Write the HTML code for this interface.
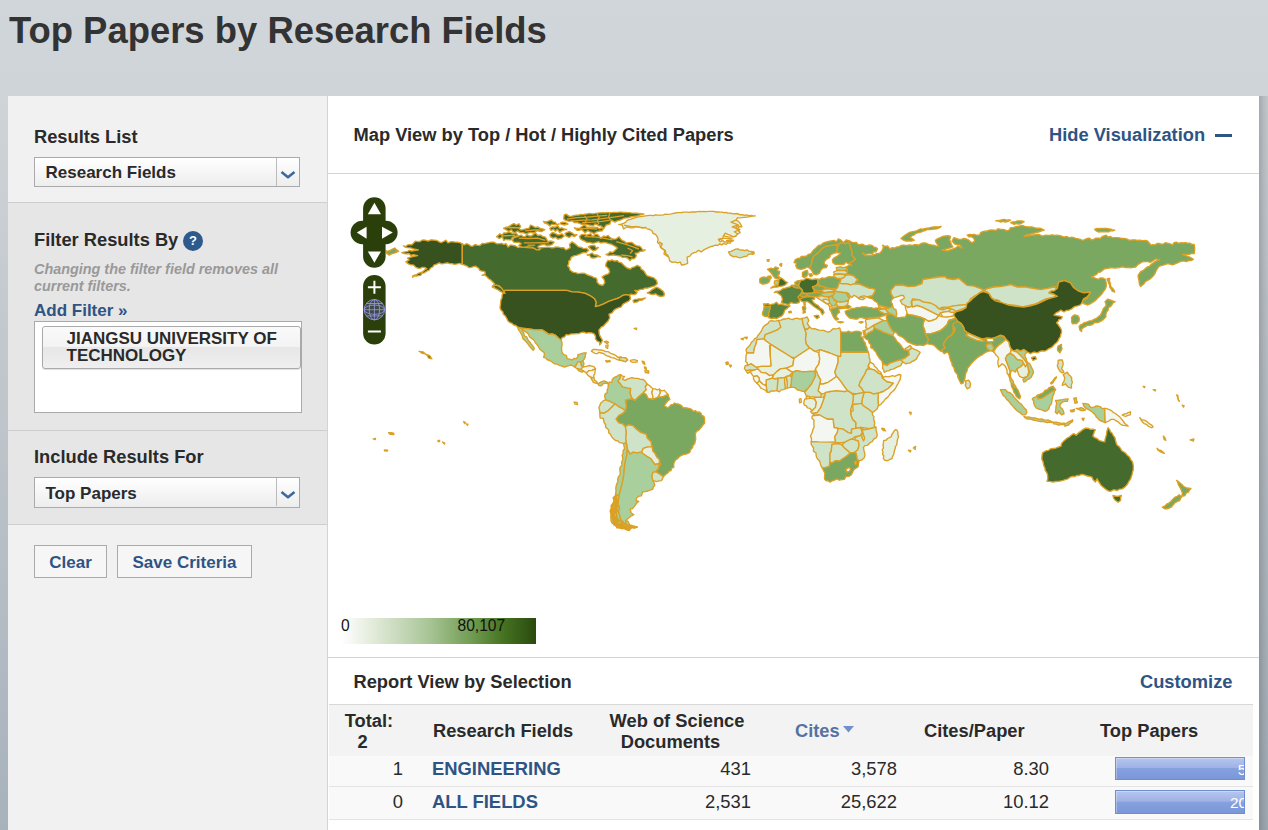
<!DOCTYPE html>
<html lang="en">
<head>
<meta charset="utf-8">
<title>Top Papers by Research Fields</title>
<style>
*{box-sizing:border-box;margin:0;padding:0}
html,body{width:1268px;height:830px;overflow:hidden}
body{background:linear-gradient(180deg,#d1d6da 0,#cfd4d8 90px,#a8b2bb 830px);font-family:"Liberation Sans",Arial,sans-serif;color:#2a2a2a;position:relative}
h1{position:absolute;left:8.9px;top:9.5px;font-size:36.45px;line-height:42px;font-weight:bold;color:#333;white-space:nowrap;letter-spacing:0}
#panel{position:absolute;left:8px;top:96px;width:1251px;height:760px;background:#fff}
#shd{position:absolute;left:1251px;top:0;width:9px;height:760px;background:linear-gradient(90deg,rgba(40,46,52,.26),rgba(40,46,52,.14) 55%,rgba(40,46,52,.08))}
#side{position:absolute;left:0;top:0;width:320px;height:760px;background:#f1f1f1;border-right:1px solid #d3d3d3}
.sec{position:absolute;left:0;width:319px}
.sec h3{position:absolute;left:26px;font-size:18.3px;line-height:20px;font-weight:bold;color:#2a2a2a;white-space:nowrap}
.sel{position:absolute;left:26px;width:266px;height:30px;border:1px solid #aaa;background:linear-gradient(#fff,#ededed);font-size:17px;font-weight:bold;line-height:30px;padding-left:10.5px;color:#2a2a2a}
.sel i{position:absolute;right:0;top:0;width:23px;height:28px;border-left:1px solid #bbb}
.sel svg{position:absolute;right:2px;top:12px}
#main{position:absolute;left:320px;top:0;width:931px;height:760px;background:#fff}
.hd{position:absolute;left:25.5px;font-size:18.3px;font-weight:bold;line-height:20px;color:#2a2a2a;white-space:nowrap}
.lnk{position:absolute;font-size:18.3px;font-weight:bold;line-height:20px;color:#2e5484;white-space:nowrap}
.hr{position:absolute;left:0;width:931px;height:1px;background:#d4d4d4}
.th{position:absolute;font-size:18.3px;line-height:21px;font-weight:bold;color:#2a2a2a;white-space:normal}
.tr{position:absolute;left:0;width:924px;background:#f9f9f9;border-bottom:1px solid #e4e4e4}
.td{position:absolute;font-size:18.4px;line-height:22px;color:#2a2a2a;white-space:nowrap}
.num{text-align:right}
.lk{font-weight:bold;color:#2e5484}
.bar{position:absolute;left:786px;width:130px;height:23px;overflow:hidden;border:1px solid #6f8dd2;box-shadow:inset 1px 1px 0 rgba(255,255,255,.3);background:linear-gradient(#b6c6ee 0%,#9db2e5 47%,#86a1de 50%,#7a97d9 100%)}
.bar b{position:absolute;top:2.5px;font-size:15.4px;line-height:17px;font-weight:normal;color:#fff}
</style>
</head>
<body>
<h1>Top Papers by Research Fields</h1>
<div id="panel">
 <div id="shd"></div>
 <div id="side">
  <div class="sec" style="top:0;height:107px;background:#f1f1f1;border-bottom:1px solid #cecece">
   <h3 style="top:31px">Results List</h3>
   <div class="sel" style="top:61px">Research Fields<i></i><svg width="18" height="10" viewBox="0 0 18 10"><path d="M2.5 2 L9 7.2 L15.5 2" fill="none" stroke="#3c6a9c" stroke-width="2.6" stroke-linejoin="round"/></svg></div>
  </div>
  <div class="sec" style="top:107px;height:228px;background:#e6e6e6;border-bottom:1px solid #cecece">
   <h3 style="top:26.5px">Filter Results By</h3>
   <span style="position:absolute;left:175px;top:28px;width:20px;height:20px;border-radius:50%;background:#2d5a8c;color:#fff;font-size:13px;font-weight:bold;line-height:20px;text-align:center">?</span>
   <p style="position:absolute;left:26px;top:58px;width:270px;font-size:14.4px;line-height:17.2px;font-style:italic;font-weight:bold;color:#999">Changing the filter field removes all current filters.</p>
   <a class="lnk" style="left:26px;top:98px;font-size:17px">Add Filter »</a>
   <div style="position:absolute;left:26px;top:118px;width:268px;height:92px;background:#fff;border:1px solid #aaa">
     <div style="position:absolute;left:7px;top:3.5px;width:259px;height:43.5px;border:1px solid #aaa;border-radius:3px;box-shadow:0 1px 1px rgba(0,0,0,.12);background:linear-gradient(#fafafa 0%,#f3f3f3 48%,#e7e7e7 50%,#efefef 100%);font-size:17px;line-height:16.9px;font-weight:bold;color:#2a2a2a;padding:4.5px 0 0 23.5px">JIANGSU UNIVERSITY OF TECHNOLOGY</div>
   </div>
  </div>
  <div class="sec" style="top:335px;height:94px;background:#e6e6e6;border-bottom:1px solid #cecece">
   <h3 style="top:15.5px">Include Results For</h3>
   <div class="sel" style="top:46px;height:31px;line-height:32px">Top Papers<i></i><svg width="18" height="10" viewBox="0 0 18 10"><path d="M2.5 2 L9 7.2 L15.5 2" fill="none" stroke="#3c6a9c" stroke-width="2.6" stroke-linejoin="round"/></svg></div>
  </div>
  <div style="position:absolute;left:26px;top:449px;width:73px;height:33px;border:1px solid #aaa;background:#f6f6f6;font-size:17px;font-weight:bold;color:#2e5484;line-height:33px;text-align:center">Clear</div>
  <div style="position:absolute;left:109px;top:449px;width:135px;height:33px;border:1px solid #aaa;background:#f6f6f6;font-size:17px;font-weight:bold;color:#2e5484;line-height:33px;text-align:center">Save Criteria</div>
 </div>
 <div id="main">
  <div class="hd" style="top:28.6px">Map View by Top / Hot / Highly Cited Papers</div>
  <a class="lnk" style="left:721px;top:28.5px">Hide Visualization</a>
  <span style="position:absolute;left:887px;top:37.5px;width:17px;height:3px;background:#2e5484"></span>
  <div class="hr" style="top:77px"></div>
  <div id="map" style="position:absolute;left:0;top:78px;width:931px;height:483px;overflow:hidden"><!--MAP--><svg id="mapsvg" width="931" height="483" viewBox="0 0 931 483" stroke="#dba024" stroke-width="1.35" stroke-linejoin="round" style="position:absolute;left:0;top:0">
<path d="M509.2,73.9 507.1,70.8 508.2,69.6 511.0,68.6 512.1,70.0 509.2,73.9Z" fill="#7aa860" stroke="none"/>
<path d="M205.0,74.9 197.2,74.4 195.4,73.0 196.5,71.9 198.0,71.6 204.2,72.1 206.1,73.8 205.0,74.9Z" fill="#456a2e" stroke="none"/>
<path d="M519.2,98.9 515.6,96.5 516.8,95.1 518.8,94.4 520.1,95.5 520.4,96.8 520.4,97.8 519.2,98.9Z" fill="#7aa860" stroke="none"/>
<path d="M491.2,112.6 488.5,112.4 487.4,111.2 490.0,107.9 492.4,111.5 491.2,112.6Z" fill="#7aa860" stroke="none"/>
<path d="M728.0,116.1 725.4,113.2 726.5,112.1 728.0,112.1 729.5,110.1 730.6,111.2 730.4,113.5 728.0,116.1Z" fill="#37521f" stroke="none"/>
<path d="M172.2,114.1 169.1,112.0 170.8,110.4 173.4,113.0 172.2,114.1Z" fill="#456a2e" stroke="none"/>
<path d="M506.5,116.6 501.5,115.9 496.2,116.1 495.1,115.0 495.9,114.2 495.4,113.2 497.0,112.1 503.8,114.1 507.0,114.1 508.1,115.2 506.5,116.6Z" fill="#7aa860" stroke="none"/>
<path d="M500.8,119.4 498.8,119.4 497.6,118.2 498.8,117.1 504.5,116.4 506.0,114.9 508.9,117.2 507.8,118.4 505.2,119.1 500.8,119.4Z" fill="#a9cf9c" stroke="none"/>
<path d="M659.8,119.9 655.5,118.4 652.5,119.4 651.4,118.2 656.0,115.1 659.0,116.9 660.9,118.8 659.8,119.9Z" fill="#cfe3c8" stroke="none"/>
<path d="M493.0,121.1 491.8,119.9 488.2,119.4 484.8,119.9 483.6,118.8 485.6,117.0 485.4,116.5 486.5,115.4 490.5,115.9 493.5,115.4 497.4,118.8 496.2,119.9 494.2,120.1 493.0,121.1Z" fill="#7aa860" stroke="none"/>
<path d="M479.0,121.6 477.0,120.1 473.2,120.4 472.1,119.2 473.1,116.8 474.2,115.6 475.8,117.9 481.5,118.1 482.6,119.2 479.0,121.6Z" fill="#7aa860" stroke="none"/>
<path d="M724.0,120.6 721.2,120.4 720.1,119.2 722.0,117.9 724.0,118.4 725.1,119.5 724.0,120.6Z" fill="#cfe3c8" stroke="none"/>
<path d="M641.8,127.9 640.6,126.8 641.4,125.0 645.2,121.6 648.5,119.9 649.6,121.0 641.8,127.9Z" fill="#cfe3c8" stroke="none"/>
<path d="M471.5,126.4 469.1,123.0 471.5,120.4 473.8,122.1 477.0,121.6 479.0,120.1 483.5,121.4 484.6,122.5 483.5,123.6 477.0,123.9 473.2,124.9 471.5,126.4Z" fill="#5a8540" stroke="none"/>
<path d="M727.0,123.9 725.4,122.8 728.0,120.4 730.1,122.2 729.0,123.4 727.0,123.9Z" fill="#37521f" stroke="none"/>
<path d="M755.8,126.6 754.1,125.5 754.4,125.0 760.0,120.6 761.1,121.8 760.1,124.0 758.8,125.4 755.8,126.6Z" fill="#7aa860" stroke="none"/>
<path d="M696.8,133.9 694.5,133.9 693.4,132.8 694.5,131.6 707.8,128.9 718.0,123.6 722.2,122.9 723.4,124.0 722.2,125.1 719.2,125.9 708.8,130.9 696.8,133.9Z" fill="#37521f" stroke="none"/>
<path d="M585.8,127.1 584.2,127.1 583.1,126.0 584.8,123.9 590.2,124.4 591.4,125.5 590.2,126.6 585.8,127.1Z" fill="#cfe3c8" stroke="none"/>
<path d="M672.5,129.1 667.5,127.9 664.4,125.2 665.5,124.1 670.8,125.1 673.6,128.0 672.5,129.1Z" fill="#37521f" stroke="none"/>
<path d="M583.5,131.1 582.4,130.0 582.1,128.5 582.4,127.2 583.5,126.1 584.6,127.2 584.6,130.0 583.5,131.1Z" fill="#cfe3c8" stroke="none"/>
<path d="M692.8,133.6 680.8,132.1 678.4,130.5 679.5,129.4 680.8,129.4 692.8,131.4 693.9,132.5 692.8,133.6Z" fill="#cfe3c8" stroke="none"/>
<path d="M614.5,136.4 610.8,135.9 609.6,134.8 610.8,133.6 614.0,132.6 616.1,135.0 614.5,136.4Z" fill="#cfe3c8" stroke="none"/>
<path d="M626.8,139.9 625.5,138.9 620.8,138.4 619.6,137.2 623.2,133.9 627.2,136.4 636.0,133.1 637.6,134.2 634.0,136.9 628.0,138.6 626.8,139.9Z" fill="#cfe3c8" stroke="none"/>
<path d="M563.5,141.4 557.2,140.9 556.1,139.8 557.2,138.6 561.0,138.1 563.5,139.1 564.6,140.2 563.5,141.4Z" fill="#7aa860" stroke="none"/>
<path d="M614.2,143.6 610.8,142.6 609.6,141.5 612.2,138.1 615.4,142.2 614.2,143.6Z" fill="#f4f7f1" stroke="none"/>
<path d="M625.5,157.9 624.4,156.8 623.9,154.5 624.4,153.2 625.8,152.1 627.9,154.2 625.5,157.9Z" fill="#7aa860" stroke="none"/>
<path d="M193.5,155.4 191.8,154.9 190.6,153.8 191.8,152.6 193.5,152.9 194.6,154.0 193.5,155.4Z" fill="#a9cf9c" stroke="none"/>
<path d="M624.8,160.4 623.6,159.0 625.5,156.9 626.6,158.2 624.8,160.4Z" fill="#7aa860" stroke="none"/>
<path d="M675.5,163.4 672.2,162.4 671.5,162.6 670.4,161.5 672.0,160.1 675.2,160.9 676.6,162.2 675.5,163.4Z" fill="#37521f" stroke="none"/>
<path d="M655.5,167.1 650.9,164.2 652.0,163.1 654.0,163.9 657.0,163.4 658.1,164.5 655.5,167.1Z" fill="#37521f" stroke="none"/>
<path d="M442.0,177.6 440.9,176.5 440.6,171.5 442.2,170.1 443.4,171.2 443.1,176.5 442.0,177.6Z" fill="#f4f7f1" stroke="none"/>
<path d="M490.5,179.9 486.8,178.4 485.6,177.2 486.8,176.1 491.2,174.6 492.4,176.0 491.9,178.2 490.5,179.9Z" fill="#f4f7f1" stroke="none"/>
<path d="M688.8,178.9 686.0,178.1 684.9,177.0 688.8,174.6 689.9,175.8 689.9,177.8 688.8,178.9Z" fill="#e6f0e0" stroke="none"/>
<path d="M465.8,185.6 463.1,183.5 464.2,182.4 466.2,182.9 467.4,184.0 465.8,185.6Z" fill="#cfe3c8" stroke="none"/>
<path d="M539.2,196.6 537.6,195.5 539.1,192.0 540.2,190.9 542.9,194.8 541.8,195.9 539.2,196.6Z" fill="#cfe3c8" stroke="none"/>
<path d="M488.0,198.1 486.8,198.1 485.6,197.0 487.5,194.1 488.6,195.2 489.1,197.0 488.0,198.1Z" fill="#f4f7f1" stroke="none"/>
<path d="M422.5,198.1 421.1,197.0 421.1,196.0 422.2,194.9 425.2,194.9 426.4,196.0 425.2,197.1 422.5,198.1Z" fill="#cfe3c8" stroke="none"/>
<path d="M700.5,200.4 699.4,199.0 699.9,198.2 699.6,196.2 700.8,195.1 701.9,196.2 702.4,198.0 700.5,200.4Z" fill="#a9cf9c" stroke="none"/>
<path d="M463.5,203.9 460.6,201.2 464.2,197.9 465.4,199.0 465.4,199.8 464.6,202.8 463.5,203.9Z" fill="#a9cf9c" stroke="none"/>
<path d="M492.8,224.1 491.6,223.0 492.4,220.0 493.5,218.9 497.0,217.6 498.1,218.8 497.4,221.5 496.2,222.6 492.8,224.1Z" fill="#cfe3c8" stroke="none"/>
<path d="M525.5,221.6 522.9,219.2 524.0,218.1 527.2,218.9 528.4,220.0 527.2,221.1 525.5,221.6Z" fill="#cfe3c8" stroke="none"/>
<path d="M486.2,225.9 481.8,225.1 480.6,224.0 480.6,222.8 481.8,221.6 486.2,221.9 487.4,223.0 487.4,224.8 486.2,225.9Z" fill="#e6f0e0" stroke="none"/>
<path d="M305.8,226.6 303.0,225.9 300.5,226.4 299.4,225.2 300.5,224.1 304.2,223.4 306.9,225.5 305.8,226.6Z" fill="#7aa860" stroke="none"/>
<path d="M525.5,231.6 524.5,231.6 523.4,230.2 524.5,229.1 526.8,229.1 527.9,230.2 526.8,231.4 525.5,231.6Z" fill="#cfe3c8" stroke="none"/>
<path d="M535.5,256.9 532.1,253.8 533.2,252.6 541.8,253.4 542.9,254.5 541.2,255.9 535.5,256.9Z" fill="#cfe3c8" stroke="none"/>
<path d="M533.5,262.9 531.4,261.0 533.8,258.4 534.9,259.5 534.9,260.5 534.6,261.8 533.5,262.9Z" fill="#cfe3c8" stroke="none"/>
<path d="M526.5,266.4 524.0,266.1 522.9,265.0 527.0,261.4 529.8,261.1 530.9,262.2 529.8,263.4 528.5,263.6 526.5,266.4Z" fill="#cfe3c8" stroke="none"/>
<path d="M514.0,271.6 510.2,270.6 507.9,268.8 509.0,267.6 516.8,267.1 517.9,268.2 514.0,271.6Z" fill="#cfe3c8" stroke="none"/>
<path d="M331.0,293.9 329.9,292.8 329.9,290.8 330.4,286.8 331.5,285.6 332.6,286.8 333.1,290.8 331.0,293.9Z" fill="#7aa860" stroke="none"/>
<path d="M134.3,69.8 131.8,68.7 129,68.2 126.8,68.1 124.5,67.7 122.3,67.8 120,68.9 117.9,66.2 115.6,67.5 113.2,68.6 111,67.8 108.9,66.5 106,66.1 103,65.8 100.1,67.1 97.1,66.2 94.4,66 92.1,67.5 89.8,67.7 87.3,67.2 85.4,69.2 83.8,70.8 81.6,70.6 79.6,70.9 77.8,72.4 75.4,72 77.3,73.3 79.6,73.7 82.6,73.9 85.4,74.9 90.4,75.9 83.7,77 81.3,76.3 79.3,77.7 77,77.9 73.7,78.7 76.1,79.6 78.7,79.9 81,79.5 83,81.5 85.4,80.7 89.6,81.6 83.7,82.9 81.6,83.5 79.6,84.2 81.2,85.9 77.9,87.9 80.4,89.9 82.8,90.9 85.4,90.9 87.9,93.3 89.9,94.1 92.1,94.3 94.1,93.3 96.3,93.3 98.8,94.6 97,95.7 95.5,97.1 93.1,98.5 90.4,99.3 88.6,100.6 86.5,101.2 84.6,102.2 84.6,103.3 86.3,102 88.4,102.1 90.4,101.7 92.7,101.3 94.1,99.2 96.3,98.8 98.7,97.2 101.3,96 102.6,94 104.7,93 105.9,91.1 108,90.4 111.4,88.8 113.4,89.9 115.6,89.6 117.6,89.1 119.7,88.8 121.7,89.7 123.9,89.6 126.4,90.3 129,89.9 131.7,89.4 134.3,90.4Z" fill="#37521f"/>
<path d="M134.3,69.8 136.3,71 138.6,69.6 140.7,70.5 142.7,72 144.7,72.2 147,70.5 149,71.2 151.9,71.5 154.1,69.5 156.4,69.6 158.6,69.1 160.8,68.7 163.3,68.1 165.8,68.2 169.1,69.8 171.4,69.7 173.6,69.3 175.8,70.4 178.1,69.7 180.1,73.1 182.5,70.9 185.1,71.3 187.6,72 189.9,73.5 192.6,72.9 199.3,73.7 206,74.2 211,75.9 212,73.7 214.4,73.7 221.1,73.2 223.4,73.8 225.6,73.8 227.8,72.9 230.3,73.1 232.8,73.7 235.8,73.7 237.8,75.9 237.8,75.9 240.1,74.9 242.2,73.7 241.4,70.4 243.9,67.9 247.2,69.9 248.9,71.4 250.6,72.9 253.2,73.4 255.6,74.6 258.5,74.3 260.6,76.2 258.1,78.7 256,78.5 254.1,78.9 252.2,79.9 250.3,80.6 248.4,81.4 246.4,81.6 243,83.3 242.7,85.6 240.8,87.1 240.6,89.7 239.7,92.1 241.4,93.7 241.9,96 243.6,97.3 245.5,98.3 247.7,98.7 249.9,99.6 252.2,99.3 254.6,99.1 256.8,99.4 258.9,100.7 261.4,101.7 264,102.4 265.8,103.7 268.1,104 269.1,105.9 269,108 271.5,110.7 274.8,111.4 276.7,108.9 276.5,106.9 275.7,105 274,103 276,101.6 278.2,100.7 280.3,99.8 281.7,98 280.7,94.7 277.7,92.1 278.2,89 280,86.3 282.1,86.9 284,85.8 286.4,87.2 289.1,86.6 290.9,88.2 293.3,88.8 296.1,91.6 299.1,94 302.5,95 304.1,93.6 306.2,93 309.2,91.3 312.5,93 313.2,95.2 315.2,96.3 316.5,97.9 317.5,99.7 318.9,101.7 321.2,102.4 323.5,103.2 325.9,103.9 328.6,106.4 329.3,109.7 326.2,112.2 322.6,113.1 319.2,114.2 316.9,114.1 314.8,115.4 312.5,115.4 309.7,116.7 306.7,116.4 309.2,118.4 307.9,120 305.8,120.6 302.5,120.1 301.1,122.5 302.5,124.8 301.6,121.4 298.3,120.6 294.9,121.4 290.7,124 285.7,125.6 280.7,127.3 275.7,129.8 270.7,131.8 267.3,132.5 268.1,128.1 266.5,124.8 262.3,121.8 257.3,119.4 250.6,118.1 243.9,117.8 238.8,116.4 202,116.4 176.7,116.4 175,118.1 171.7,116.4 173.3,113.9 170.8,111.4 168.3,113.4 166.1,113.9 164.1,113 165.5,111.5 166.6,109.7 164.1,107.2 162.5,105.8 160.8,104.7 158.3,102.2 156.4,100.9 154.1,101.3 157.4,99.7 156.6,97.3 154.1,97.1 151.8,96.4 150.7,94.3 147.4,92.1 145.3,92.7 143.2,93.3 140.8,93.6 139,92.1 136.7,91.1 134.3,90.4Z" fill="#456a2e"/>
<path d="M176.7,116.4 202,116.4 238.8,116.4 243.9,117.8 250.6,118.1 257.3,119.4 262.3,121.8 266.5,124.8 268.1,128.1 267.3,132.5 270.7,131.8 275.7,129.8 280.7,127.3 285.7,125.6 290.7,124 294.9,121.4 298.3,120.6 301.6,121.4 302.5,124.8 301,126.9 297.7,128.6 295.8,129.6 294.3,131.1 293.2,133 291,133.6 288.4,134.6 286,136.1 284.3,138.6 280.9,140.3 281.8,143.7 280.1,147 278.4,148.7 276.7,150.4 275.4,152.1 273.4,152.9 270.9,155.9 271.2,159.6 271.8,161.7 272.9,163.7 274.4,166.1 273.4,168.8 271.7,170.9 271.7,168.2 269.2,167.1 267.5,164.9 267.5,162.1 265.9,159.6 263.4,158.8 260.8,158.7 258.2,159.2 255.8,158.2 253.2,158.5 250.8,159.6 248.3,159.6 245.8,159.9 243.1,159.9 240.7,160.9 238.1,160.7 236.6,162.9 234,163.7 233.2,166.3 230.7,164.2 227.4,161.2 224,159.9 220.7,160.4 217.3,157.9 214,155.9 207.3,155.9 200.6,154.9 193.9,154.2 189.7,153.2 187.9,151.5 185.5,150.9 184.1,149.4 182.1,148.7 180,147 178.8,144.5 177.4,142.1 175.4,140.3 174.8,137.8 172.9,136.1 172,133.7 172.4,131.1 172.6,128.6 172.9,126.1 174,123.7 174.1,121Z" fill="#37521f"/>
<path d="M193.9,154.2 200.6,154.9 207.3,155.9 214,155.9 217.3,157.9 220.7,160.4 224,159.9 227.4,161.2 230.7,164.2 233.2,166.3 234,168.7 234,171.3 233.5,173.8 233.7,176.3 234.1,178.7 235.7,180.5 238.5,181.7 239.1,184.7 241.6,185.2 244.1,186 245.9,184.5 248.3,184.7 249.7,182.8 250,180.5 252.1,180.2 254.1,179.3 256.2,178.8 258.3,178.8 257.3,180.8 257.2,183 256.3,185 255,186.7 252.5,188 250,187.7 248.3,191 246.6,193 243.3,191 241.2,191.6 239.1,192.2 236.6,193.1 234,192.2 231.4,191.3 229,190 226.2,189.8 224,188 221.6,186.5 219,185.5 217.6,183.9 215.6,183.3 216.5,180.5 215.9,178.3 214,177.1 212,175.3 210.6,173 209.2,170.7 207.3,168.8 206.1,166.3 203.9,164.6 201.6,163 200.6,160.4 199.2,158.7 197.2,157.6 194.7,155.9Z" fill="#a9cf9c"/>
<path d="M189.7,153.2 193.5,154.5 195.9,159.6 196.5,162 198.9,163.1 199.7,165.4 201.5,167.6 203.1,169.9 204.9,172 206.4,174.3 205.2,176.3 203.3,174.2 201.4,172.1 200.2,170.4 198.9,168.7 197.5,167.1 195.1,165.1 194.2,162.1 193.2,159.8 191.9,157.6 190.4,155.6Z" fill="#a9cf9c"/>
<path d="M248.3,191 250,187.7 252.5,188 253.3,191.4 255,193 252.5,195.6 249.1,194.7 246.6,193Z" fill="#cfe3c8"/>
<path d="M253,187.7 255.1,187.2 256,189.7 255.1,192.2 253.5,191.7Z" fill="#a9cf9c"/>
<path d="M255,193 257.1,192.6 259.2,192.2 261.5,191.5 263.7,192.1 265.9,192.7 267.5,194.7 264.2,196.4 260.8,196.7 258.3,198.9 255.8,197.2 252.5,195.6Z" fill="#f4f7f1"/>
<path d="M249.1,194.7 252.5,195.6 255.8,197.2 254.1,198.2 250.8,196.9Z" fill="#cfe3c8"/>
<path d="M258.3,198.9 260.8,196.7 264.2,196.4 267.5,194.7 267,197.2 266.9,199.7 265.7,201.6 265.9,203.9 262.5,203.1 260,201.4Z" fill="#f4f7f1"/>
<path d="M262.5,203.1 265.9,203.9 266.4,206.1 268.4,207.3 270.2,209.8 267.5,209.1 265.4,208.3 264.2,206.4Z" fill="#cfe3c8"/>
<path d="M270.2,209.8 272.6,208.1 275.9,206.8 278.6,207.8 280.3,209.8 277.6,209.1 275.1,209.8 273.4,211.8 270.9,211.5Z" fill="#a9cf9c"/>
<path d="M263.4,177.1 265.1,175.5 267.5,175.5 270,175.8 272.6,176 275.2,176.4 277.6,177.6 280.3,177.7 282.6,179.3 285.2,180.1 287.6,181.3 289.8,183.3 292.7,183 295.1,183.9 297.7,183.8 299.7,186 297.2,187.7 294.3,186.7 291.8,186.3 289.3,185.7 286,184 283.3,183.6 280.9,182.3 278.1,181.6 275.9,179.7 273.4,179 270.9,178.3 269,179.7 266.7,179.3Z" fill="#f4f7f1"/>
<path d="M291.8,183.3 294.7,183.7 297.7,184 299.7,186 297.2,187.7 294.3,186.7 291,185.7Z" fill="#cfe3c8"/>
<path d="M277.6,186.7 279.7,187 281.8,186.4 282.3,187.7 278.4,188Z" fill="#f4f7f1"/>
<path d="M302.4,186.4 306.1,185.7 309.4,186.7 309.1,188 305.2,188.4 302.7,187.7Z" fill="#f4f7f1"/>
<path d="M276.2,167.6 278.4,167.1 280.6,168.3 279.3,169.6Z" fill="#f4f7f1"/>
<path d="M277.9,171.3 280.1,170.9 279.6,174.3 277.9,173.3Z" fill="#f4f7f1"/>
<path d="M314.1,187.2 316.1,187.7 316.9,190.5 315.3,189.7Z" fill="#f4f7f1"/>
<path d="M316.4,193 318.1,193.4 318.4,195.6 316.9,194.7Z" fill="#f4f7f1"/>
<path d="M319.1,196.7 320.8,197.2 320.5,199.1 319.1,198.4Z" fill="#f4f7f1"/>
<path d="M306.1,154.5 308.7,154.2 308.4,155.5Z" fill="#f4f7f1"/>
<path d="M246.1,228.2 249.1,228.5 249.5,230.6 247.1,230.2Z" fill="#f4f7f1"/>
<path d="M91,177.3 94.8,177.8 97.4,179.9 94.3,179.4Z" fill="#37521f"/>
<path d="M97.9,180.4 100,180.9 101.9,181.9 103.9,184.9 100.4,183.9 99.6,181.8Z" fill="#37521f"/>
<path d="M290.7,50.3 293.2,50.2 295.4,49.4 297.5,48.4 299.1,46.4 309.2,43.1 319.2,41.6 321.2,41.3 323.2,41.3 325.3,41.6 327.3,40.8 329.3,41.1 331.3,41.2 333.3,41.1 335.3,40.9 337.3,40.2 339.3,40.4 341.3,40.2 343.4,39.8 345.3,39.3 347.4,39 349.4,38.7 351.4,38.6 353.4,38.5 355.4,38.1 357.4,38.1 359.4,38.1 361.4,38.4 363.4,37.9 365.4,38 367.4,38 369.4,37.7 372,37.4 374,37.6 376,37.4 378,37.6 380,37.3 382,37.4 384,37.4 386.1,37.4 388,38 390.1,37.9 392.1,38.1 394.1,38.1 396.1,38.7 398.1,38.5 400.1,39.1 402.1,39.1 404.1,39.5 406.1,39.8 408.2,39.5 410.2,40 412.2,40.7 414.4,40.7 416.5,41.4 418.7,40.9 420.8,41.6 423,41.5 425.1,41.9 427.3,41.9 425,42.1 422.8,42.4 420.6,42.9 418.4,43.1 416.1,43.3 413.9,43.7 411.7,43.9 409.4,43.8 408,46.1 410.4,47.4 412.2,49.4 413.9,52.8 410.9,52.5 409.7,55.3 411.3,56.7 412.2,58.7 409.7,59.8 408,62 404.9,62.9 402.1,61.2 399.7,60.3 397.3,59.2 395.4,62 394.6,64.4 392.6,65 390.4,65.4 392.1,67.9 394.3,66.4 396.6,68 398.8,67.9 401,67.3 403.3,66.7 405.5,66.2 403.4,67.3 402.1,69.2 399.9,68.8 398,70.5 395.7,69.4 393.8,70.9 391.5,70 389.6,71.5 387.4,71.1 385.4,72 382.8,72.7 380.4,73.7 377.8,74.9 375.3,76.2 373.3,77.9 370.4,76.3 368.4,78.1 366.1,78.7 363.6,79.9 361.9,82.1 359.1,83.2 359.4,86.3 359.7,89.3 356.9,90.5 353.5,91 352.4,88.2 349.4,88.8 346.9,87.9 344.3,88.3 341.7,86.8 341,83.8 339.8,81.3 337.6,79.6 337.5,76.8 335.1,75.4 332.5,73.5 331.8,70.4 329.5,68.4 330.1,65.4 329.2,62.7 327.6,60.3 325.1,59.5 324.2,57 321.9,55.5 319.2,54.8 317.2,53.3 314.7,54 312.5,53.6 310.3,53 308,52.4 305.8,53.6 303.5,53.9 301.3,53.7 299.1,52.8 295.6,55 294.1,51.1Z" fill="#e6f0e0"/>
<path d="M400.5,77.9 403.1,77.4 405.5,76.2 407.7,75.2 410,74.8 412.2,76.2 414.4,76 416.7,76.7 418.9,75.9 421,77.1 423.3,77.5 425.6,77.9 424.7,80.4 422.4,79.8 420.5,80.3 418.9,82.1 416.6,82.5 414.4,83.2 412.2,83.8 410,83.4 407.8,82.4 405.5,82.9 402.1,80.9Z" fill="#cfe3c8"/>
<path d="M235.7,44.9 236.2,40.8 238.1,40.1 241.4,42.4 244,42.2 246.5,41.5 249,41.1 251,41 253,40.4 255.1,40.7 257.1,40.1 259.1,39.9 261.1,39.5 263.1,39.7 265.2,39.9 267.2,39.3 269.2,39.2 271.2,38.9 273.2,38.8 275.3,38.7 277.3,38.8 279.3,38.6 281.3,38.7 283.3,38.6 285.4,38.3 287.4,38.3 289.4,38.3 291.4,38.1 293.4,38.1 295.5,38.5 297.5,38.4 299.5,38.6 301.7,38.7 303.9,39.1 306.2,39.1 308.4,39.2 310.9,39.4 313.5,39.6 316,40.1 313.9,40.6 311.7,41 309.7,41.8 302.1,43 300.1,43.9 297.9,43.9 295.8,44.3 293.9,45.3 292,46.2 289.3,46.8 286.9,48.1 283.3,46.1 281.8,50 278,51.2 275.9,54.5 273,51.9 270.9,51.9 269.2,50.6 266.9,50 265.4,51.9 261.6,51.2 259,50.7 256.5,50 253.9,50.4 251.5,49.3 249,48.5 246.4,48.7 244.3,46.7 241.4,47.4 237.6,46.4Z" fill="#456a2e"/>
<path d="M246.4,53.8 249.1,54.4 251.7,54.2 254,52.5 256.7,50.8 259,53.5 261.6,53.1 269.2,53.5 271.2,54.8 273.4,53.9 275.5,54.4 274.2,56.9 272,57 269.9,57.4 267.9,58.2 265.7,59.7 263.7,58.3 261.6,57.8 259.7,56.4 257.2,58.8 255.3,56.9 253.3,55.4 251.1,56.3 249,56.3Z" fill="#456a2e"/>
<path d="M215.4,47.4 218.3,47.9 221.1,46.8 223.5,46 225.3,47.9 227.4,48.1 228.5,50.6 231.2,50 228.7,50.7 226.2,50.6 224.1,50.1 221.8,52 219.9,50 216.7,49Z" fill="#456a2e"/>
<path d="M232.5,48.7 235,48.1 237.6,48.5 240.1,50 236.3,51 233.1,50.2Z" fill="#456a2e"/>
<path d="M221.8,54.4 224.4,52.8 227.4,53.1 229.7,51.7 231.6,54.4 233.8,53.8 236.3,54.8 238.8,55.7 236.2,55.9 233.8,56.9 231.8,58.5 229.4,55.3 227.4,57.3 225.6,55.2 223,56.3Z" fill="#456a2e"/>
<path d="M175.6,54.4 177.6,53.3 179.9,52.9 181.9,51.9 183.9,50.6 185.9,49.5 188.2,51.2 191,49.8 192.7,52.5 190.8,54.4 192.7,56 195.2,55.7 198,54.8 200.9,54.4 202.6,51 204.9,52.1 207.2,53.5 209.9,53 212.3,54.4 214.5,54.9 216.7,55.7 213.5,57.6 211.4,57.3 209.2,56.5 207.2,58.2 205.2,59 203,58.3 200.9,58.8 198,59.8 195.2,58.6 192.1,58.6 189.5,56.9 186.9,58.9 185,57.9 183.2,55.7 180.7,57.4 178.1,55.7Z" fill="#456a2e"/>
<path d="M168.6,62.6 170.4,61.4 171.8,59.8 174.1,61.1 175.9,58.8 178.1,59.1 180.8,57.9 183.2,58.8 185.7,59.8 188.3,59.4 190.1,61.4 184.4,63.3 183.3,65.8 180.6,65.8 178,65.3 175.6,66.4 174.5,62.9 171.2,64.5Z" fill="#456a2e"/>
<path d="M185.7,63.9 190.8,62 193,61.1 195,62.3 197.1,62.6 199,60.6 201.3,62 203.4,62 205.4,60.6 207.3,58.6 209.7,61.4 212.5,61 214.8,62.6 217.3,63.1 218.6,65.2 219.8,67.6 222.4,67 224.4,67.4 226.2,68.3 223.7,70.8 218.6,71.5 216.2,70.3 213.5,70.8 211.5,71.5 209.7,72.7 212.3,75.3 208.5,75.9 204.7,73.4 199.6,72.7 194.6,73.4 190.8,71.5 193.3,69.6 190.9,68.4 188.2,68.3 185.9,68.2 184.4,66.4Z" fill="#456a2e"/>
<path d="M221.8,60.7 224.3,58.5 227.4,59.5 229.5,60.9 231.6,60.9 233.8,59.8 236.3,62 233.8,64.1 230,65.2 227.7,63.3 224.9,64.1 222.4,62.6Z" fill="#456a2e"/>
<path d="M236.9,59.5 239.1,58.3 241.4,57.5 243.9,58.8 246.1,60.6 249,60.7 246.4,62.6 243.6,61.4 241.4,63.6 238.2,62Z" fill="#456a2e"/>
<path d="M251.5,62.6 253.6,60.6 256.5,60.3 258.7,61.4 260.8,60.3 262.9,59.8 264.8,62.9 267.1,60.3 269.2,60.3 271,62 272.6,64.4 275.5,62 277.6,62.6 280,61.5 281.8,63.3 283.7,64.6 285.9,65.2 288.2,64.9 291.1,62.8 292.7,65 294.5,66.7 296.6,67.4 298.3,69.1 300.8,68.7 303.4,68.3 305.3,69.6 307.1,71.2 309.3,71.9 311.7,72.2 313.5,74 314.8,76.2 317.3,75.9 314.9,77.2 312.2,77.2 309.9,78.9 307.1,79.1 308.4,81.6 307.5,83.5 305.9,84.8 303.5,84.8 302.1,86.7 299.5,84.1 297.1,83.2 294.5,83.5 292.2,82 289.4,81.6 285.6,81 283.1,81.2 280.6,81.6 278,80.3 280.4,79.7 281.8,77.8 284.7,78.4 286.9,76.5 289.4,74 287.6,72.6 285.6,71.5 283.2,70.2 280.6,69.6 278.1,68.7 275.5,68.3 272.9,69 270.5,67.7 266.7,68.9 264.1,69.2 261.6,68.3 258.9,68.3 256.5,67 254.5,66.2 252.7,65.2Z" fill="#456a2e"/>
<path d="M259.1,81 261.7,80.2 264.1,79.1 266.3,81 269.2,81 272.4,82.9 270.1,82.5 267.9,83.5 265.4,84.1 262.9,83.5 261.6,81.4Z" fill="#456a2e"/>
<path d="M260.3,72.7 262.3,71.8 264.5,71.4 266.7,71.5 268,73.7 270.5,73.4 267.9,75.9 265.3,76.8 262.9,75.3Z" fill="#456a2e"/>
<path d="M238.8,45.2 249,43.6 259.1,43.1 269.2,42.1 279.3,41.4" fill="none"/>
<path d="M243.9,47.2 255.3,46.2 264.1,45.9 274.2,44.7 285.6,43.1 295.8,41.6" fill="none"/>
<path d="M254,48.7 264.1,48.2 274.2,47.4 281.8,46.2" fill="none"/>
<path d="M256.5,41.8 259.1,44.9 257.2,48.1" fill="none"/>
<path d="M269.2,40.1 271.1,43.6 269.2,47.4 271.1,50" fill="none"/>
<path d="M281.8,39.3 280.6,43 282.5,46.2" fill="none"/>
<path d="M249,54.8 259.1,54.4 269.2,55" fill="none"/>
<path d="M178.1,53.8 185.7,53.5 192,54" fill="none"/>
<path d="M197.1,56.9 205.9,56 213.5,56" fill="none"/>
<path d="M173.1,62 180.6,61.6 187,61.4" fill="none"/>
<path d="M190.8,64.1 200.9,64.5 209.7,64.1 217.3,66.4" fill="none"/>
<path d="M195.8,68.9 205.9,68.9 214.8,68.7 221.1,68.9" fill="none"/>
<path d="M199.6,71.2 207.2,71.2" fill="none"/>
<path d="M256.5,62.6 266.7,62.9 275.5,64.1 284.4,65.8" fill="none"/>
<path d="M288.2,67.7 297,70.2 304.6,72.7 310.9,75" fill="none"/>
<path d="M293.2,81 299.5,81.6 304.6,82.9" fill="none"/>
<path d="M299.5,74 304.6,76.5 302.1,79.7" fill="none"/>
<path d="M319.2,118.9 321.9,117.5 324.2,115.6 326.3,114.4 328.4,113.1 331.8,114.7 333.4,116 335.1,117.3 336.3,119.4 336,121.8 332.6,122.5 329.9,121.5 327.6,119.8 325.1,120.5 322.6,120.1Z" fill="#456a2e"/>
<path d="M305,126.5 306.8,125.5 308.8,125.3 310.8,124.8 313.1,124.9 315.3,124.4 317.5,124 314.2,126.1 311.5,126.4 309.2,127.8 305.8,128.5Z" fill="#456a2e"/>
<path d="M164.6,111.8 168.7,111 173.8,114.3 177.1,119.4 174.6,118.5 172.4,117.4 170.4,116 167.1,114.3Z" fill="#456a2e"/>
<path d="M297.4,226.2 303.1,225.2 306.9,226.2 310.7,222.4 315.4,218.6 318.3,220.5 320.1,224.3 324.9,225.2 329.6,223.3 335.3,222.4 340,220.5 340.7,222.9 341.9,225.2 339.8,226.9 338.1,229 336.2,231.9 338.1,232.9 340,233.8 341.5,232.4 342.9,230.9 345,230.4 346.6,229 348.4,229.9 350.5,230 352.3,230.9 354,232.1 355.2,233.8 357.5,233.7 359.6,234.2 361.8,234.7 363.7,235.4 365.1,237.4 367.5,236.6 369,238.2 371.5,238 373.1,239.4 373.9,241.5 376,242.3 376.5,244.6 376.6,247 376.6,249.2 375,250.8 373.7,252.8 372.2,254.6 370.6,256.4 368.4,257.4 367.4,259.6 367.5,262.1 367.7,265 367.1,267.8 366.6,269.8 365,271.4 364.6,273.5 362.8,275.6 361.8,278.2 360,279.4 358,280.1 356,280.4 354.1,281.1 352.3,282 350.8,283.3 349.4,284.8 347.6,285.8 346.6,287.7 345.7,289.6 345.7,293.4 343.7,294.2 343,296.5 341,297.2 339.9,298.9 338.1,300 335.3,302.8 331.5,300 327.7,297.7 330.6,294.3 332.4,290.5 331.5,285.8 328.7,283 326.8,279.2 324.9,277.3 323.9,272.6 323,267.8 319.2,264 318.3,260.3 312.6,258.4 307.8,254.6 305,251.7 300.3,250.8 297.4,252.7 294.6,249.8 290.8,248.9 288,245.1 290.8,241.3 294.6,239.4 297.4,236.6 298.4,231.9Z" fill="#7aa860"/>
<path d="M280.4,210.1 281.2,208.1 284.2,208 284.2,205.4 286.2,203.4 288.9,202.5 290.6,201.1 292.7,200.6 292.1,204.4 289.9,207.3 292.7,210.1 294.6,212.9 299.3,213.9 302.7,214.4 302.2,219.6 304.1,224.3 297.4,226.2 298.4,231.9 297.4,236.6 294.6,234.7 290.8,232.8 287,230 282.3,227.7 277.6,225.8 276.6,222.4 277.1,219.8 279.4,218.6 279.1,216.2 280,213.9Z" fill="#a9cf9c"/>
<path d="M292.7,200.6 294.3,202.1 296.5,202.5 294.6,205.4 297.4,206.3 299.2,205.2 301.2,204.4 304.1,203.7 306.9,204.4 309.8,204.4 312.6,205.4 315.3,205.5 317.3,207.3 319.2,210.1 317.3,212.9 318.3,215.8 315.4,218.6 310.7,222.4 306.9,226.2 304.1,224.3 302.2,219.6 302.7,214.4 299.3,213.9 294.6,212.9 292.7,210.1 289.9,207.3 292.1,204.4Z" fill="#cfe3c8"/>
<path d="M319.2,210.1 322,212 323.4,213.5 324.9,214.8 323.9,218.6 324.9,222.4 324.9,225.2 320.1,224.3 318.3,220.5 315.4,218.6 318.3,215.8 317.3,212.9Z" fill="#f4f7f1"/>
<path d="M324.9,214.8 327.1,214.9 329.3,215.8 331.5,215.2 332.4,218.6 330.6,222.4 329.6,223.3 324.9,225.2 324.9,222.4 323.9,218.6Z" fill="#f4f7f1"/>
<path d="M331.5,215.2 333.6,216.9 336.2,216.3 337.7,217.9 339.1,219.6 340,220.5 335.3,222.4 329.6,223.3 330.6,222.4 332.4,218.6Z" fill="#f4f7f1"/>
<path d="M277.6,225.8 282.3,227.7 287,230 283.2,233.8 280.4,236.6 275.7,239.4 271.9,238.5 271.6,236.1 270.9,233.8 271.8,231.4 272.8,229 275.7,226.6Z" fill="#cfe3c8"/>
<path d="M287,230 290.8,232.8 294.6,234.7 297.4,236.6 294.6,239.4 290.8,241.3 288,245.1 290.8,248.9 294.6,249.8 297.4,252.7 298.4,258.4 297.8,264 298.4,268.8 295.5,269.7 293.6,268.8 291.4,268.6 289.9,266.9 287.6,266.5 286,265.2 284.5,263.8 283.2,262.1 282.5,260.1 280.6,258.7 280.8,256.2 279.4,254.6 277.5,253.2 277.7,250.7 276.3,249 275.7,247 275.4,244.5 272.1,243.9 271.9,241.3 271.9,238.5 275.7,239.4 280.4,236.6 283.2,233.8Z" fill="#cfe3c8"/>
<path d="M297.4,252.7 300.3,250.8 305,251.7 307.8,254.6 312.6,258.4 318.3,260.3 319.2,264 323,267.8 323.9,272.6 319.2,273.1 315.4,274.4 313.5,278.2 308.8,278.8 305,278.2 302.2,280.1 299.3,275.4 298.4,268.8 297.8,264 298.4,258.4Z" fill="#cfe3c8"/>
<path d="M315.4,274.4 319.2,273.1 323.9,272.6 324.9,277.3 326.8,279.2 328.7,283 331.5,285.8 331.1,289.6 326.8,290.5 324.9,287.7 323,284.9 318.3,282 314.5,279.2 313.5,278.2Z" fill="#e6f0e0"/>
<path d="M324.9,298.1 327.7,297.7 331.5,300 335.3,302.8 334.5,304.8 333.4,306.6 331,306.8 328.7,307.6 324.9,306.6 323.6,302.8Z" fill="#cfe3c8"/>
<path d="M295.5,269.7 298.4,268.8 299.3,275.4 298.9,281.1 297.4,286.8 296.5,292.4 295.9,300 294.6,307.6 292.7,315.1 290.8,322.7 289.9,330.3 290.8,337.9 292.7,345.4 295.5,348.3 298.4,352.1 294.6,354.9 291.8,354 288.9,353.9 288.4,351.2 286.2,350.4 284.2,349.2 282.9,346.5 283.2,343.5 283.1,340.9 283,338.4 284.2,336 284.1,333.5 284.4,331.1 286,328.9 286.1,326.5 285.1,323.8 287.4,321.8 287.7,319.4 288,317 287.8,314.5 288.1,312.1 288.8,309.8 289.9,307.6 289.7,305.1 290.5,302.7 292.2,300.6 292.1,298.1 291.8,295.6 292.1,293.2 294,291.1 293.6,288.6 294.5,286.3 294.8,284 294.1,281.4 295.2,279.2 295,276.8 296.6,274.5 296,272.1Z" fill="#a9cf9c"/>
<path d="M302.2,280.1 305,278.2 308.8,278.8 313.5,278.2 314.5,279.2 318.3,282 323,284.9 324.9,287.7 326.8,290.5 331.1,289.6 330.6,294.3 327.7,297.7 324.9,298.1 323.6,302.8 324.9,306.6 326.1,308.9 326.8,311.4 325.2,312.9 324.9,315.1 322.5,316 320.1,317 317.3,317.7 314.5,318 313.5,321.8 310.9,322.2 308.8,323.7 307.8,326.5 310.7,327.4 309.1,328.7 307.8,330.3 305.9,333.1 304.4,334.7 302.2,335 303.1,338.8 305.9,340.7 303.4,341.8 301.2,343.5 299.6,344.7 298.4,346.4 299.3,349.2 301.1,350.6 302.2,352.6 298.4,352.1 295.5,348.3 292.7,345.4 290.8,337.9 289.9,330.3 290.8,322.7 292.7,315.1 294.6,307.6 295.9,300 296.5,292.4 297.4,286.8 298.9,281.1 299.3,275.4Z" fill="#a9cf9c"/>
<path d="M316.9,196.7 320.1,197 319.8,198.9 317.3,198.5Z" fill="#f4f7f1"/>
<path d="M297.9,346.4 300.2,347.5 301.4,350.7 305,351.9 307.2,352.4 309.3,353.1 306.2,354 304.3,353.1 302.2,353.2 299.1,351.6 297.5,349.1Z" fill="#a9cf9c"/>
<path d="M288,320.7 286.4,323.9 286.1,327 284.5,329.8 283.1,331.7 283.3,334.1 282.1,337.3 283.3,340.4 282.9,343.6 284.7,345.2 285.3,347.5 285.7,350.7 288.8,352.7 291.3,353 293.5,354.2 295.7,354.2 297.5,355.4 299.4,356.1 301.4,356.6 302.2,355 304,353.6 306.2,353.9 309.3,353.1 307.1,353.2 305,352.4 301.4,351.9 298.3,350.7 295.1,349.5 292.4,347.5 290.4,345.6 288.8,342.8 288.4,339.7 289.2,336.5 288.8,333 289.6,330.2 290,327 289.6,324.7 289.2,322.7Z" fill="#dba024"/>
<path d="M289.2,333 291.2,332.2 291.6,334.9 290,336.9 288.8,335.7Z" fill="#a9cf9c"/>
<path d="M467.2,85.8 469.3,84.5 471.7,84.2 473.5,82.3 476.1,82.5 478.6,82 480.5,80.3 483,79.6 484.4,77.5 485.9,75.7 487.7,74.2 490.5,71.4 493,70.9 494.9,69.2 497.6,68.2 500.5,67.5 503.2,66.9 506,66.4 508.3,67.8 510.4,64.9 512.7,65.9 515.5,68.7 518.2,65.9 521.6,67 520.4,68.7 517.1,69.8 514.9,68.7 511.6,69.5 508.2,70.9 503.8,71.4 499.4,72 496.1,73.1 493.3,75.3 490.5,78.6 487.7,80.8 485.5,82.5 484.4,85.3 483.9,88.6 482.8,91.4 481.6,94.1 479.4,93 476.1,94.7 472.8,95.3 469.4,94.7 467.8,91.9 468.3,89.2 466.1,88.6Z" fill="#7aa860"/>
<path d="M484.4,85.3 485.5,82.5 487.7,80.8 490.5,78.6 493.3,75.3 496.1,73.1 499.4,72 503.8,71.4 508.2,70.9 509.4,73.1 508.8,76.4 509.4,78.6 506,79.2 502.7,80.8 501.6,83.6 498.3,85.3 496.1,88.1 496.6,90.3 499.4,91.4 498.3,93.6 494.9,94.1 492.7,96.4 491.6,99.1 488.3,100.8 485.5,100.2 484.4,97.5 482.8,95.3 481.6,94.1 482.8,91.4 483.9,88.6Z" fill="#7aa860"/>
<path d="M509.4,73.1 511.6,69.5 514.9,68.7 517.1,69.8 520.4,68.7 522.1,70.9 522.7,74.2 524.3,77.5 523.8,80.8 526,83.6 527.6,85.3 523.8,88.1 520.4,89.7 517.9,88.1 516,90.3 513.8,90.7 511.6,90.6 509.4,90.4 507.1,90.3 504.9,88.6 504.4,85.8 506.6,83.6 509.4,82 511.6,80.3 512.7,79.2 509.4,78.6 508.8,76.4Z" fill="#7aa860"/>
<path d="M508.2,93.6 510.4,93.1 512.7,92.8 515.4,93.6 518.2,93 519.3,95.3 516.6,96.4 511.6,96.4 508.8,95.8Z" fill="#a9cf9c"/>
<path d="M505.5,98 508.8,96.6 511.6,96.6 516.6,96.6 519.6,98 518.8,100.2 514.9,100.2 510.5,99.7 506.6,100.2Z" fill="#cfe3c8"/>
<path d="M505.5,100.8 510.5,100 514.9,100.5 517.7,101.4 516,103.6 512.7,104.7 508.8,104.1 506.6,103Z" fill="#cfe3c8"/>
<path d="M517.7,101.4 521.6,100.5 526,101.9 528.8,104.7 530.4,106.3 528.2,107.4 527.1,109.7 522.7,110.8 518.2,109.7 513.8,109.7 511,109.1 512.7,106.3 512.7,104.7 516,103.6Z" fill="#cfe3c8"/>
<path d="M489.4,105.2 491.8,105.2 493.8,103.9 496.7,104.3 499.4,103.2 501.4,102.7 503.5,102.8 505.5,102.8 508.8,104.3 512.7,104.9 512.7,106.3 511,109.1 509.9,113 508.2,115.2 506,114.4 503.8,115 500.5,114.1 496.1,113 491.6,111.9 490,108.6Z" fill="#7aa860"/>
<path d="M472.8,106.3 476.1,105.8 478.3,104.1 480.5,104.7 483.9,105.5 487.7,105 489.4,105.2 490,108.6 488.3,111.3 484.4,113 485.5,115.2 486.6,117.4 484.4,119.1 479.4,119.1 475,118.8 474.4,116.3 472.2,114.1 470.6,111.9 471.1,109.1Z" fill="#456a2e"/>
<path d="M474.4,98.6 477.2,96.9 479.4,96.4 480,99.1 478.9,101.9 476.1,103.6 474.4,102.5Z" fill="#7aa860"/>
<path d="M480.8,100.2 483.3,99.7 484.4,101.7 482.2,102.6Z" fill="#7aa860"/>
<path d="M466.7,108.6 469.4,106.9 472.8,106.3 471.1,109.1 470.6,111.3 467.8,110.8Z" fill="#7aa860"/>
<path d="M463.9,111.3 467.8,110.8 470.6,111.9 471.7,113.9 468.9,114.1 465.6,113Z" fill="#7aa860"/>
<path d="M453.4,115.8 455.2,114.5 457.3,114.1 459.5,113.4 461.7,113 463.9,111.3 465.6,113 468.9,114.1 471.7,113.9 474.4,116.3 473.3,119.1 471.7,121.3 470,123 471.7,125.7 471.1,128.5 469.2,129.1 467.2,129.4 465,129.1 462.8,128.5 460.6,130.7 456.1,129.6 453.4,128.5 454.5,125.2 453.4,121.9 450.6,119.6 448.6,118.2 446.2,118.5 447.8,117.4 451.7,116.9Z" fill="#5a8540"/>
<path d="M471.7,121.3 473.3,119.6 477.2,119.4 479.4,120.8 477.2,122.7 473.9,123Z" fill="#7aa860"/>
<path d="M479.4,119.6 484.4,119.1 488.3,118.5 490.5,118.6 492.7,119.1 493.3,121.3 490,122.7 486.1,123 482.8,122.4 479.4,121.3Z" fill="#7aa860"/>
<path d="M484.4,113 488.3,111.3 491.6,111.9 496.1,113 497.2,114.7 493.8,116.3 490.5,116.9 486.6,116.3Z" fill="#7aa860"/>
<path d="M493.8,116.3 497.2,115.2 501.6,115 506,115.8 504.9,117.4 500.5,118 496.6,118.5 494.4,118Z" fill="#cfe3c8"/>
<path d="M493.3,119.6 496.6,118.8 501,118.3 505.5,118 506.6,119.6 504.4,121.9 500.5,123 496.1,122.7 493.8,121.9Z" fill="#a9cf9c"/>
<path d="M471.7,125.7 473.3,124.1 477.2,123 481.6,122.7 486.1,123.2 486.6,125.2 483.9,125.7 485.5,128.5 488.3,130.7 490.3,131.7 491.6,133.5 494.9,135.7 496.1,138.5 494.4,140.7 493.3,139 492.7,136.8 490,135.2 488.3,134 486.6,132.9 483.9,130.7 481.1,128.5 478.9,127.4 476.1,128 473.9,127.4Z" fill="#5a8540"/>
<path d="M486.1,141.8 488.3,141.3 490.5,141.3 491.1,143.5 488.8,144.6Z" fill="#5a8540"/>
<path d="M474.4,132.9 477.2,132.4 477.9,134.4 476.9,136.5 477.4,138.5 475,139 475.3,136.9 474.6,134.9Z" fill="#7aa860"/>
<path d="M475.9,128.5 477.2,128.3 477.2,131.3 476.1,131.3Z" fill="#5a8540"/>
<path d="M440.1,129.6 442.1,131.1 444.2,130.2 446.2,129.8 448.5,128.3 450.6,130.6 452.8,130.2 457.3,131.3 462.2,131.8 459.5,134.1 456.7,136.3 455.6,139.6 453.9,141.8 450.6,143.5 448.5,144.6 446.2,144 443.4,144.6 440.6,143.5 440.6,139.6 441.7,135.2 442.3,132.9 436.2,132.4 435.6,129.8 437.9,130Z" fill="#5a8540"/>
<path d="M436.2,132.4 442.3,132.9 441.7,135.2 440.6,139.6 440.6,142.9 436.7,142.4 434.5,140.7 434.6,138.4 435.6,136.3Z" fill="#7aa860"/>
<path d="M460.6,137.6 463,137.2 463.4,138.5 461.1,138.9Z" fill="#5a8540"/>
<path d="M431.8,104.7 433.8,103.4 436.2,103 438.5,103.6 440.6,102.5 442.3,104.7 441.2,108 438.4,109.7 434.5,110.2 431.8,108.6Z" fill="#7aa860"/>
<path d="M439.5,102.5 442.3,101.9 443.4,103.9 441.7,104.7Z" fill="#7aa860"/>
<path d="M439.5,95.3 442.8,94.1 445.4,94.9 447.3,93 450.6,94.1 448.9,96.4 451.7,97.5 451.2,100.2 449.5,101.9 452.3,103.6 451.2,105.2 447.8,104.7 445.6,102.5 444,100.2 442.3,98Z" fill="#7aa860"/>
<path d="M451.2,105.2 453.4,104.1 455.6,105.8 457.3,107.4 459.5,108.6 457.3,110.8 455,111.9 451.7,112.4 448.9,113 446.2,113.2 442.8,114.1 445.1,112.4 447.8,111.7 450.1,110.8 450.6,108Z" fill="#456a2e"/>
<path d="M446.7,106.9 450.1,106.3 450.6,108.6 450.1,110.8 447.3,110.8 446.2,109.1Z" fill="#a9cf9c"/>
<path d="M509.9,113 511,109.1 513.8,109.7 518.2,109.7 522.7,110.8 527.1,109.7 530.4,109.7 533.7,110.8 537.1,112.4 541.5,114.1 545.9,114.7 547.6,116.3 545.9,119.6 544.3,121.9 541.5,122.4 539.3,123 536,121.9 533.2,122.4 530.4,124.1 528.2,122.4 526,121.3 523.8,123.5 522.1,122.4 520.4,119.6 518.2,118.5 514.9,118.5 511.6,118 508.2,117.4 506,115.8 508.2,115.2Z" fill="#cfe3c8"/>
<path d="M530.4,124.1 533.7,123.2 537.1,124.1 534.9,125.7 532.1,125.4Z" fill="#cfe3c8"/>
<path d="M518.2,118.5 520.4,119.6 522.1,122.4 521.6,124.1 519.9,122.4 518.2,120.2Z" fill="#a9cf9c"/>
<path d="M505.5,118 508.2,117.4 511.6,118 514.9,118.5 518.2,118.8 519.9,122.4 521.6,124.1 520.4,126.3 517.1,127.4 512.7,128 508.8,127.4 506,125.7 503.8,123.5 504.4,121.9 506.6,119.6Z" fill="#a9cf9c"/>
<path d="M508.8,127.6 512.7,128.2 517.1,127.6 520.4,126.5 519.9,129.6 518.2,131.8 516,132.5 513.8,132.9 509.9,132.4 508.2,130.2Z" fill="#cfe3c8"/>
<path d="M488.3,123 490,122.7 493.3,121.6 496.1,122.7 500.5,123 504.4,121.9 503.8,123.5 506,125.7 508.8,127.4 508.2,130.2 509.9,132.6 506,134.1 502.7,135.2 501.6,132.9 500.5,130.7 497.7,129.1 494.9,127.4 492.2,125.7 490.5,124.6Z" fill="#cfe3c8"/>
<path d="M500.5,123.2 504,122.4 506,125.7 508.5,127.6 508.2,130.2 506.6,131.8 503.8,131.3 501.6,129.1 501,126.3Z" fill="#a9cf9c"/>
<path d="M494.9,125.7 497.7,125.2 501,126.3 501.6,129.1 499.4,129.8 496.6,128.3Z" fill="#e6f0e0"/>
<path d="M501.6,132.9 503.8,132.1 504.4,134.6 503.3,137.4 501.8,135.7Z" fill="#e6f0e0"/>
<path d="M502.7,135.2 504.4,134.6 506.6,134.1 509.9,132.6 513.8,133.2 516.2,133.3 518.2,132.1 517.7,134.1 513.8,134.6 510.5,135.2 511.6,138.5 509.4,139.6 508.2,142.9 510.5,145.1 508.2,146.2 506,144 504.4,140.7 503.3,137.9Z" fill="#7aa860"/>
<path d="M509.4,147.9 512.7,147.6 515.5,148.2 512.7,148.9Z" fill="#7aa860"/>
<path d="M517.1,137.4 519.3,136.4 521.6,135.7 524.2,134.4 527.1,134.1 529.3,133.5 531.6,133.6 533.7,132.9 536,132.8 538.2,133 540.4,133.5 543.2,133.7 545.9,134.6 548.1,134 550.4,134.1 555.4,134.6 556.5,138.5 557,141.8 554.7,141.8 552.6,142.9 547,143.5 541.5,144 537.1,144.6 533.7,143.5 531.2,143.6 529.3,145.1 527.1,145.1 524.9,144.6 521.6,144 519.3,141.8 517.7,139.6Z" fill="#7aa860"/>
<path d="M518.2,132.1 520.4,131.3 522.9,132.9 520.4,134.3 518,134.1Z" fill="#7aa860"/>
<path d="M531,148.2 533.2,147.6 535.1,148 533.2,149.1Z" fill="#7aa860"/>
<path d="M550.4,131 555.9,132.9 560.9,134.1 559.8,135.7 557.7,135 555.4,134.8 550.9,133.5Z" fill="#cfe3c8"/>
<path d="M424,78.6 426,78.2 426.2,79.7 424.6,80.4Z" fill="#f4f7f1"/>
<path d="M439,85.8 441.2,85.5 440.8,87.3 439.5,87.3Z" fill="#f4f7f1"/>
<path d="M451.7,90.3 453.7,89.5 453.5,92.2 452.3,91.9Z" fill="#7aa860"/>
<path d="M521.6,67 523.7,68.2 526,68.7 528.4,68.5 530.2,70.6 532.6,70.3 534.9,70.2 537,71.6 539.3,71.4 541.8,71 544,71.4 545.9,73.1 548,73.4 549.6,74.9 547.9,77.9 545.7,77.7 544.3,80.2 542,79.6 537,80.4 534.5,78.7 537,81.6 543.7,81.6 548.7,79.6 551.7,79.2 553.8,77 554.7,75 555.4,72.9 554.6,71.2 557,72.4 559.6,72 562.1,74.9 564.2,73.7 566.7,74.1 568.8,72.9 571.2,72.8 573.2,71.4 575.5,71.2 577.7,71.3 580,71.2 582.2,70.9 584.3,71.4 586.4,70.7 588.5,70.6 590.6,71.2 594,69.2 596.5,68.8 599,69.5 601.1,70.5 603.4,70.9 605.7,71.2 608.1,72.1 610.7,72 608.2,68.7 607.4,66.2 609.7,64.6 612.4,63.7 614.7,62.3 617.4,62 620,61.7 622.4,62.5 621.6,66.2 622.7,68.2 623.3,70.4 624.9,72.9 619.1,74.9 614,75.9 619.1,77 624.9,74.9 627.7,73.9 630,72 634.1,74.2 632.5,71.2 627.4,70.4 625.6,68.9 624.1,67 625.8,63.7 628.3,64.5 630.8,65.3 633.4,65.3 635.8,64.5 638.4,65 640.8,66.2 642.3,67.8 644.2,68.7 646.7,67 645.9,64.5 643.6,62.8 640.8,62.8 639.2,61.1 641.4,60.5 643.7,60.7 645.9,60.3 648.7,61.2 651.7,61.1 652.6,58.6 654.7,57.7 657,57.2 659.3,57 661.4,56.1 663.7,55.9 666,56.1 668.1,56.4 670.1,54.8 672.2,55.2 674.3,55.3 676.5,55.6 678.6,56.9 681,56.1 682.7,53.6 685,53.6 687.2,52.8 689.4,52.4 694.4,51.4 696.8,52.3 699.4,52.8 701.6,53 703.9,52.8 706.1,53.6 708.3,54.2 710.6,54.2 712.8,54.4 716.2,56.1 713.7,56.8 711.2,57.8 704.5,59.5 697.8,61.1 696.1,62.5 702.8,61.5 709.5,60.3 711.8,60.7 713.7,62 715.8,61.7 717.9,61.1 720.1,61.3 722.4,61.1 724.6,60.8 726.6,61.5 728.8,61.2 730.9,61.3 732.9,62 734.9,62.7 736.9,62.9 739,62.5 741.1,63.8 743.5,63.2 745.7,63.7 747.9,64.3 750.2,64.8 752.4,65.3 754.9,66.5 757,65.4 759.1,64.5 761.4,64.1 763.4,66 765.8,65.3 767.9,64.2 770.2,64.1 772.5,64.5 773.8,62.8 775.8,62 778.1,61.2 780.2,63 782.5,62.5 784.6,63.8 786.9,63.6 789.2,63.7 791.5,63.8 793.6,64.5 795.9,64.5 798.6,64.9 800.9,66.2 803,66.1 805.1,65.8 807.2,65.9 809.3,66.5 811.3,66.2 813.4,66.4 815.4,66.7 817.4,66.4 819.4,67 821.3,68.9 822.7,71.2 824.8,70.6 827,71 828.9,69.4 831.1,69.5 833.2,70.2 835.3,70.1 837.3,68.7 839.4,69.2 842.1,69.8 844.5,71.2 846.1,68.7 848.3,68.1 850.6,69.4 852.8,68.7 855,68.9 857.3,68.7 859.5,69.2 861.8,69.2 863.9,70.3 866.2,70.4 866.5,72.7 866.8,75 866.5,77.3 866.2,79.6 863.6,79.4 861.2,80.4 854.5,80.4 861.2,82.9 863.4,84 865.4,85.4 862.9,86.6 860.7,86.7 858.5,87.5 856.2,87.1 853.9,87.2 851.6,87.8 849.5,88.8 847,89.8 844.5,90.9 842,90.2 839.4,89.6 837,90.6 834.4,91.3 832.1,91.8 830.2,93.3 828.6,96 827.6,97.8 826.9,99.7 825.3,101.9 823.5,103.8 821.6,105.3 819.4,106.4 817.3,107.7 816,109.7 814.4,111.1 812.7,112.5 811.6,110.6 811.2,108.5 811,106.4 810.3,103.9 810.1,101.3 811.4,99.5 812.7,97.6 815.4,96.3 817.7,94.3 819.3,93 821.3,92.4 822.7,90.9 827.7,87.1 831.9,85.9 827.7,84.9 822.7,88.3 819.4,87.6 816.8,87.6 814.3,87.9 812.2,89.2 810.1,90.4 807.6,93 805.1,93.4 802.6,93.8 800.4,93.4 798.1,93.7 795.9,93 793.6,92.8 791.4,93.6 789.2,93.8 787.2,94.1 785.2,93.8 783.2,93.6 781.2,94 779.2,94.3 776.6,94.8 774.5,96.4 772.5,98 770.1,98.4 768.6,100.3 766.6,101.3 763.3,103.3 765.9,103.6 768.3,104.7 770.6,105.2 772.5,103.8 775.2,104.1 777.5,105.5 777.9,107.6 778.3,109.7 778.3,112.3 777.5,114.7 776.3,116.4 775,118.1 773.5,120.3 771.6,122.3 769.5,124.3 767.4,126.4 765.8,127.6 764.1,128.6 762.4,129.8 759.1,131 757.2,130.2 755.2,129.5 754,126.4 759.1,124.4 760.7,121.4 762.4,118.1 755.7,118.9 750.7,117.2 745.7,113.9 742.3,108.9 736.5,106.7 730.6,108 728.9,113 726.2,113 719.5,114.4 712.8,115.6 706.1,114.7 697.8,113 689.4,113 682.7,110.5 679.4,111.4 672.7,112.7 666,113 659.3,114.7 655.9,116.1 652.6,114.7 645.9,112.2 639.2,111.4 635,108 630.8,104.3 625.8,105.5 619.1,104.7 617.4,102.7 610.7,103 602.3,104.3 594.8,105.5 594,109.7 587.3,112.2 580.6,112.7 573.9,111 567.2,111.4 563,116.4 563,119.7 565.5,123.9 563.8,125.8 563,128.1 564.4,130 564.7,132.3 561,134 550.4,131 549.3,128.5 547.4,127.7 545.9,126.3 544,124.6 541.5,124.1 539.3,123.2 541.5,122.4 544.3,121.9 545.9,119.6 547.6,116.3 545.9,114.7 541.5,114.1 537.1,112.4 533.7,110.8 530.4,109.7 527.1,109.7 528.2,107.4 530.4,106.3 528.8,104.7 526,101.9 521.6,100.5 518.8,100.2 519.6,98 519.3,95.3 518.2,93 520.4,91.7 523.8,91 520.4,89.7 523.8,88.1 527.6,85.3 526,83.6 523.8,80.8 524.3,77.5 522.7,74.2 522.1,70.9 520.4,68.7Z" fill="#7aa860"/>
<path d="M573,64.5 575,62.7 577.2,61.1 579.3,59.7 581.4,58.4 583.9,57.8 586.2,57.3 588.5,56.9 590.6,55.8 592.6,54.9 594.9,55.2 596.9,54.6 599,54.1 601.1,53.9 603.2,53.4 605.3,53 607.4,52.8 610.3,52.8 613.2,52.4 610.7,54.1 608.5,54.9 606.2,55 604,55.3 601.7,55.6 599.4,55.5 597.3,56.5 595,57.1 592.9,58.1 590.6,58.6 587.9,59.4 585.6,61.1 583.6,62 582.2,63.7 584.4,64.9 586.4,66.2 583.6,67.1 580.6,67 578,67 575.5,66.2Z" fill="#7aa860"/>
<path d="M667.6,46.9 669.8,46.5 672.1,46.3 674.3,45.7 676.4,45.5 678.5,46.2 680.6,45.8 682.7,46.1 679.4,47.7 677.2,48 674.9,47.4 672.7,48.1 670.2,47.1Z" fill="#7aa860"/>
<path d="M682.7,48.6 684.9,47.8 687.3,47.9 689.4,46.9 691.7,46.8 693.9,47 696.1,47.7 692.8,49.8 690.6,50.1 688.3,49.6 686.1,50.3Z" fill="#7aa860"/>
<path d="M766.6,55.3 769,54.5 771.6,54.7 774.1,54.4 776.3,54.5 778.6,54.5 780.8,54.8 782.8,55.1 784.7,56 786.7,56.1 784.8,56.8 782.6,56.7 780.8,57.8 778.7,57.9 776.6,57.7 774.6,57.7 772.5,57.8 770.3,58 768.3,57Z" fill="#7aa860"/>
<path d="M779.2,104.7 781.7,104.3 781.4,107.1 782.5,109.7 782.5,112.1 784.2,113.9 785.8,115.8 786.7,118.1 784.2,117.2 783.2,115 781.7,113 781.5,110.8 780.5,108.9Z" fill="#7aa860"/>
<path d="M563,116.4 567.2,111.4 573.9,111 580.6,112.7 587.3,112.2 594,109.7 594.8,105.5 602.3,104.3 610.7,103 617.4,102.7 619.1,104.7 625.8,105.5 630.8,104.3 635,108 639.2,111.4 645.9,112.2 652.6,114.7 655.9,116.1 652.6,118.1 649.2,120.6 645.9,122.3 642.5,124.8 640.8,128.1 639.2,130.6 632.5,131.1 625.8,131.8 620.7,133.1 614,133.5 610.7,134.8 607.4,131.5 602.3,129 595.6,128.1 590.6,125.6 584.7,124.8 583.1,128.1 583.9,132.3 579.7,133.5 577.2,131.5 573.9,129.8 572.2,126.4 574.5,125.5 576.4,123.9 575.5,121.4 572.9,121.5 570.5,122.3 568,123.2 565.5,123.9 563,119.7Z" fill="#cfe3c8"/>
<path d="M655.9,116.1 659.3,114.7 666,113 672.7,112.7 679.4,111.4 682.7,110.5 689.4,113 697.8,113 706.1,114.7 712.8,115.6 719.5,114.4 726.2,113 728,114.3 728.8,116.4 724.6,118.1 721.2,119.4 728.8,120.6 726.2,123.1 717.9,124.8 712.8,127.3 707.8,129.8 701.1,131.5 694.4,132.8 687.7,131.5 681,130.6 674.3,129.8 671,126.4 664.3,124.8 661.8,120.6 659.3,118.1Z" fill="#cfe3c8"/>
<path d="M583.9,126.4 590.6,125.6 595.6,128.1 602.3,129 607.4,131.5 610.7,134.8 614,135.7 619.1,134 623.3,134.8 620.7,137.3 615.7,138.2 612.4,139 610.7,141.5 607.4,139.8 604,138.2 599,135.7 594,133.1 588.9,131.5 584.7,133.1 583.9,129.8Z" fill="#cfe3c8"/>
<path d="M577.2,131.5 579.7,133.5 583.9,132.3 584.7,133.1 588.9,131.5 594,133.1 599,135.7 604,138.2 607.4,139.8 610.7,141.5 608.2,144.9 604,146.5 600.7,147.4 596.5,144.9 592.3,143.2 585.6,141.5 580.6,140.7 578.9,139.8 578.8,137.7 578,135.7 577.4,133.6Z" fill="#f4f7f1"/>
<path d="M614,133.5 620.7,133.1 625.8,131.8 632.5,131.1 639.2,130.6 639.2,133.1 632.5,135.7 627.4,137.3 625.6,135.6 623.3,134.8 619.1,134 615.7,135.7Z" fill="#cfe3c8"/>
<path d="M612.4,139 615.7,138.2 620.7,137.3 623.1,138.4 625.8,138.2 628.3,141.5 623.3,142.4 619.1,143.2 614.9,142.9Z" fill="#f4f7f1"/>
<path d="M596.5,144.9 600.7,147.4 604,146.5 608.2,144.9 610.7,141.5 614.9,142.9 619.1,143.2 623.3,142.4 628.3,141.5 630.8,142.9 625.8,144.9 620.7,146.5 619.1,150.7 615.7,154.1 612.4,156.6 607.4,158.3 602.3,159.9 597.3,159.9 596.5,155.7 594.8,151.6 595.6,148.2Z" fill="#f4f7f1"/>
<path d="M597.3,159.9 602.3,159.9 607.4,158.3 612.4,156.6 615.7,154.1 619.1,150.7 620.7,146.5 625.8,144.9 630.8,142.9 632.5,144.9 634.1,148.2 630.8,149.9 626.6,150.7 624.9,154.9 625.8,158.3 623.8,160.8 627.2,154.2 626.3,157.9 623.8,161.2 619.6,163.7 617.1,167.1 615.4,170.4 617.1,173.8 612.9,177.1 611,176 609.3,174.6 607.9,173 606.1,171.3 603.7,170.4 601.2,170.2 598.7,169.6 600.4,165.4Z" fill="#7aa860"/>
<path d="M557.1,139.8 564.7,140.7 568,142.9 570,143.7 572.2,143.5 574.7,143.2 577.2,143.2 578.9,139.8 580.6,140.7 585.6,141.5 592.3,143.2 596.5,144.9 595.6,148.2 594.8,151.6 596.5,155.7 597.3,159.9 600.4,165.4 598.7,169.6 595.3,171.6 593.1,171.2 590.9,171.1 588.7,171.3 586.4,170.6 584.1,169.9 582,168.8 579.6,168 577.9,166.2 576.1,164.6 574.3,163.1 572.2,162.2 570.2,161.2 568.9,159.2 566.9,157.9 564.7,158.3 562.1,153.2 558.8,148.2 559.1,145.9 558.2,143.9 558.9,141.6Z" fill="#7aa860"/>
<path d="M557.1,134.8 561,134 564.7,132.3 565.7,134.7 568,135.7 568.2,137.8 568.8,139.8 568,142.9 564.7,140.7 560.5,139Z" fill="#a9cf9c"/>
<path d="M550.4,135.7 557.1,134.8 560.5,139 557.1,139.8 552.9,138.2Z" fill="#cfe3c8"/>
<path d="M655.6,117.7 660.7,119.4 663.2,123.6 667.4,126.9 674,128.6 680.7,131.1 688.3,132.4 695.8,133.1 702.5,131.9 709.2,129.8 714.2,127.7 719.3,125.2 724.3,123.6 729.3,122.4 726,120.2 720.9,118.5 723.2,116.9 726,116.9 729.3,114.3 730.6,108 736.5,106.6 742.4,108.8 745.7,113.8 750.7,117.2 755.8,118.9 762.5,118 759.4,122.7 755.3,125.2 753.6,129.4 751.8,131.2 749.4,131.9 747.1,132.3 745.2,133.6 743.3,135.2 741,136.1 738.3,136.5 736,137.8 732.7,136.1 730.8,137.7 728.5,138.6 726,141.1 728.5,141.7 731,142 734.3,142.8 733.3,144.9 731,145.3 730.2,147.3 728.5,148.7 729.9,150.2 731,152 732.5,154 733.5,156.2 733.5,158.4 732.7,160.4 732.4,162.7 731,164.6 730,166.9 728.5,168.8 726.6,170.2 725.1,172.1 723.2,173.7 720.9,174.6 718.9,176 716.7,177.1 714.6,176.8 712.6,177.1 709.2,178.8 705.9,178 702.5,179.7 699.2,178 695.8,175.5 692.5,177.1 689.1,175.5 685.8,177.1 683.3,175.5 681.6,172.1 680.7,167.9 678.2,165.4 675.7,162.1 672.4,161.2 669,162.9 664,164.6 659,164.2 654,164.9 648.9,162.9 643.9,160.9 639.7,158.7 636.4,156.2 635.5,152.9 633,149.2 629.7,147 627.2,143.7 625.5,140.3 628,137.8 633.9,136.1 638,133.6 638.9,129.4 642.2,126.9 645.6,123.6 648.9,121 652.3,118.5Z" fill="#37521f"/>
<path d="M703.4,183.8 705.4,183 707.5,182.7 708.4,185 705,186.4Z" fill="#37521f"/>
<path d="M730.1,172.1 733.5,170.4 733.4,172.5 734,174.6 733,176.8 731.8,178.8 729.6,176.3 729.5,174.2Z" fill="#7aa860"/>
<path d="M625.5,149.5 629.7,147.5 633,149.5 635.5,153.2 636.4,156.5 639.7,159.2 638,161.2 642.2,163.7 648.9,166.3 655.6,167.1 656.3,164.8 659,164.2 664,164.6 669,162.9 672.4,161.6 675.7,162.6 677.7,165.4 674,168.8 670.7,171.3 667.4,174.6 665.7,178 663.2,176.3 660.7,177.1 658.1,178 655.6,179.7 653.6,181.1 651.4,182.2 649.3,183.8 647.3,185.5 645.2,187.6 643.1,189.7 641.6,192 639.7,193.9 639.2,196.5 638,198.9 637.4,200.8 637.1,202.8 636.9,204.8 635.2,209 633,209.8 631.8,207.3 630.5,204.8 629.8,202.8 629.5,200.6 628,198.9 626.7,197.1 626.3,195 625.5,193 624.2,191.3 623.8,189.1 623,187.2 622.2,185.3 621.7,183.3 621.3,181.3 619.6,178 616.3,179.7 614.9,178 612.9,177.1 617.1,173.8 615.4,170.4 617.1,167.1 619.6,163.7 623.8,161.2 626.3,157.9 627.2,154.2 624.7,152Z" fill="#7aa860"/>
<path d="M658.1,170.4 663.2,169.6 665.7,173 664.8,177.1 661.5,176.6 659,174.3Z" fill="#a9cf9c"/>
<path d="M639.7,159.2 643.9,160.9 648.9,163.2 654,165.3 656.5,167.1 655.6,167.6 648.9,166.3 642.2,163.7 638,161.2Z" fill="#cfe3c8"/>
<path d="M658.6,164.4 665.3,164.4 665.7,167.6 659,167.8Z" fill="#ffffff"/>
<path d="M637.5,206.8 640.6,206.1 641.7,207.9 642.6,209.8 641.9,213.5 639.2,214.8 637.2,211.5 637.9,209.2Z" fill="#cfe3c8"/>
<path d="M665.7,178 667.4,174.6 670.7,171.3 674,168.8 677.7,165.4 680.7,167.9 681.6,172.1 683.3,175.5 682.4,178.8 679.1,181.3 677.4,184.7 679.1,188.9 680.7,193 682.4,198.1 680.7,201.4 679,199.2 679.1,196.4 678.1,193.8 676.6,191.4 674,189.7 672.5,191.5 670.7,193 669.9,189.7 669.9,187.1 670.7,184.7 669.8,182.7 668.2,181.3 667.1,179.5Z" fill="#f4f7f1"/>
<path d="M679.1,181.3 682.4,179.3 685.8,181.3 689.1,185.5 694.1,186.4 695.8,189.7 692.5,193 689.1,194.7 687.4,198.1 685.5,196.8 683.3,196.4 682.4,199.7 682.4,202.3 683.3,204.8 685.1,207 685.8,209.8 687.3,211.7 688.3,214 685.8,213.1 685.1,210.7 683.3,209 682,206.6 681.6,203.9 680.7,201.4 682.4,198.1 680.7,193 679.1,188.9 677.4,184.7Z" fill="#a9cf9c"/>
<path d="M683.3,175.5 685.8,177.1 689.1,178 692.5,181.3 695.8,184.7 699.2,189.7 697.5,193 695.8,189.7 694.1,186.4 689.1,185.5 685.8,181.3 682.4,179.3Z" fill="#e6f0e0"/>
<path d="M689.1,175.5 692.5,177.1 695.8,175.5 699.2,178 696.7,180.5 697.3,182.7 698.3,184.7 698.7,186.8 699.7,188.6 701.7,189.7 703,192.2 704.2,194.7 705.2,196.7 705.5,198.9 704.2,200.9 703.4,203.1 701.5,204.8 699.2,205.6 697.8,207.3 695.8,208.1 695,205.6 699.2,202.3 701.7,198.1 700,193.9 699.2,189.7 695.8,184.7 692.5,181.3 689.1,178Z" fill="#a9cf9c"/>
<path d="M689.1,194.7 692.5,193 695.8,189.7 697.5,193 699.2,189.7 700,193.9 700.8,198.1 699.2,202.3 695,203.9 691.6,202.3 690,198.9Z" fill="#e6f0e0"/>
<path d="M683.3,209 685.1,210.7 685.8,213.1 688.3,214 689.9,215.9 690.8,218.2 691.6,220.3 692.5,222.4 691.6,224.9 689.9,223.7 688.3,222.4 687.3,220.1 685.8,218.2 685.2,215.5 683.8,213.1 683.3,211.1Z" fill="#7aa860"/>
<path d="M672.4,215.7 674.9,215.6 677.4,215.7 679.5,218 682.4,219 684.1,220.4 685.4,222.2 686.6,224 688.8,226 690.8,228.2 693.2,230 695,232.4 696.5,234.2 698.3,235.7 698.8,238.4 697.5,240.8 694.1,240.8 692.3,238.8 690,237.4 687.7,235.5 685.8,233.2 684.3,231.6 682.8,230.1 681.6,228.2 680.2,226.6 678.4,225.2 677.4,223.2 675.1,221.5 674,219Z" fill="#a9cf9c"/>
<path d="M704.2,224.9 705.7,223.6 707.8,223 709.2,221.5 711.6,220.7 713.9,219.7 715.9,218.2 717.2,216.3 719.6,215.9 720.9,214 723,213.1 725.1,212.3 726.2,214.1 727.6,215.7 726.3,217.6 726,219.8 724.8,222.2 724.3,224.9 723.8,227.4 723.4,229.9 721.6,232.1 720.9,234.9 719,236.6 716.7,237.4 714.8,236.2 712.6,235.7 710.5,235 708.4,234.1 706.9,232.2 705.9,229.9 705.6,227.2Z" fill="#a9cf9c"/>
<path d="M709.2,221.5 711.6,220.7 713.9,219.7 715.9,218.2 717.2,216.3 719.6,215.9 720.9,214 723,213.1 725.1,212.3 726.2,214.1 727.6,215.7 724.3,217.3 719.3,220.7 714.2,224 710.1,224.9Z" fill="#7aa860"/>
<path d="M727.6,226.5 729.8,226.3 732.1,226 734.3,225.7 737.2,225.2 740.2,224.9 739.4,227.4 736.8,227.4 734.3,228.2 731.8,230.7 732.2,233.3 734.3,234.9 735.5,237.3 736,239.9 733.5,240.8 731.8,239 731,236.6 729.3,239.9 727.3,238.3 727.8,235.4 728,232.4 728.7,229.4Z" fill="#a9cf9c"/>
<path d="M695.8,242.4 698,243.2 700.3,243 702.5,243.3 704.7,243.8 707,244 709.2,244.6 711.4,245.1 713.8,244.9 715.9,245.8 718.1,246.2 720.5,246 722.6,247 726,248.6 723.8,248.7 721.5,248.2 719.3,248.6 717.1,248.2 714.9,247.3 712.6,247.5 710.3,247.2 708.1,246.6 705.9,246.3 703.8,245.3 701.5,245.1 699.2,245 697.3,244Z" fill="#a9cf9c"/>
<path d="M730.1,186.4 732.2,185.8 734.3,186 735.2,189.7 734.6,192.3 733.5,194.7 734.9,196.3 736,198.1 734.3,198.9 732.3,197.6 731,195.6 729.9,193.6 729.3,191.4 730.2,189Z" fill="#cfe3c8"/>
<path d="M735.2,200.6 737.3,199.4 739.4,198.1 740.6,200.5 742.7,202.3 743.7,204.1 743.6,206.2 744.4,208.1 743.4,211 743.5,214 740.2,213.1 738.7,211.6 737.7,209.8 734.3,211.5 734.7,209.2 736,207.3 736.8,203.9Z" fill="#cfe3c8"/>
<path d="M722.6,209 724.3,207.6 725.5,205.8 726.7,204 728.5,202.8 728,204.4 726.4,206.2 725.2,208.4 723.4,210.1Z" fill="#cfe3c8"/>
<path d="M743.5,143.7 744.9,141.9 746.9,140.8 750.2,142 751.3,144.4 751.1,147 748.6,149.5 746.5,149.5 744.4,149.8 743.6,147.8 743.8,145.7Z" fill="#7aa860"/>
<path d="M751.1,152.5 752.5,150.9 754.5,150.1 756.1,148.7 758.7,148.1 761.1,147 763.8,146.7 766.1,145.3 768.4,144.4 770.3,142.8 772.5,141.1 773.7,138.6 774.6,136.5 775.4,134.4 777.9,131.9 778,129.7 777,127.7 779.5,125.2 782.1,126 784.6,126.9 787.1,127.7 785,129 783.7,131.1 782.3,132.7 780.4,133.6 780.2,135.9 778.7,137.8 777.8,140.2 777.9,142.8 776.2,144.5 774.5,146.2 772.1,147.6 769.5,148.7 766.7,148.6 764.5,150.4 762,151.4 759.4,151.2 757.4,152.6 755.3,153.7 753.7,155.3 753.6,157.6 751.9,156.2Z" fill="#7aa860"/>
<path d="M441.5,147.2 443.8,146.7 446.1,147.1 448.4,146.8 450.7,146.4 452.9,153.1 449.9,155.6 444,158.1 437.3,160.6 436.1,164.8 428.9,165.6 428.1,169.8 426.4,174 425.6,179 418.9,179 418,175.7 419.3,173.9 420.8,172.4 422.2,170.7 423.4,168.2 425.6,166.5 426.7,164.6 429,163.6 429.8,161.4 431.5,159.7 432.9,157.7 434,155.6 435.2,153 437.3,151.1 439.8,149.6Z" fill="#cfe3c8"/>
<path d="M450.7,146.4 453.2,146.2 455.6,144.9 458.2,145 460.3,144.1 462.4,145.2 464.5,145.5 466.6,144.7 469.1,144.2 471.6,145.1 474.1,144.4 475,149.7 476.7,154.7 478.3,159.8 477.5,164.8 478.3,169.8 481.7,174 474.1,179 466.6,184 463.3,183.2 456.6,179 449.9,174.8 443.2,170.7 437.3,166.5 436.1,164.8 437.3,160.6 444,158.1 449.9,155.6 452.9,153.1Z" fill="#cfe3c8"/>
<path d="M474.1,144.4 476.7,143.9 479.2,143 480.8,146.4 479.2,149.7 480.6,151.3 481.7,153.1 479.2,155.6 476.7,154.7 475,149.7Z" fill="#cfe3c8"/>
<path d="M479.2,155.6 481.7,153.1 483.9,154.8 486.7,154.7 488.9,155.5 491.1,156.2 493.4,156.4 495.8,156.3 497.9,157.4 500.1,158.1 502.1,157.5 503.6,156 505.1,154.7 507.4,154.9 509.6,154.6 511.8,153.9 512.5,156.8 512.7,159.8 512.7,168.1 512.7,178.2 512.7,182.4 510.1,182.4 501.8,179 491.7,175.7 489.2,176.6 486.7,177.4 481.7,174 478.3,169.8 477.5,164.8 478.3,159.8 476.7,154.7Z" fill="#cfe3c8"/>
<path d="M512.7,157.8 515.6,158.1 518.5,158.1 520.7,157.2 523,158.3 525.2,157.8 528.1,157.2 531.1,157.3 533.6,158.9 532.7,162.3 534.9,163.8 535.3,166.5 537.1,168.7 537.8,171.5 538.8,173.5 539.4,175.7 540.3,178.2 512.7,178.2Z" fill="#7aa860"/>
<path d="M418.9,179 425.6,179 426.4,174 428.1,169.8 428.9,165.6 436.1,164.8 437.3,166.5 443.2,170.7 441.5,171.5 442.3,181.5 443.2,191.6 441.5,192.4 433.1,192.4 428.1,193.3 423.1,189.9 418.9,191.6 419.5,189.2 417.6,187.2 418,184.9 417.9,181.9Z" fill="#f4f7f1"/>
<path d="M442.3,171.5 443.2,170.7 449.9,174.8 456.6,179 463.3,183.2 465.8,184.9 464.9,191.6 458.2,194.1 452.4,194.9 449,197.4 445.7,200.8 441.5,201.6 438.1,199.1 433.1,198.3 429.8,194.9 428.9,193.3 433.1,192.4 441.5,192.4 443.2,191.6 442.3,181.5Z" fill="#e6f0e0"/>
<path d="M465.8,184.9 466.6,184 474.1,179 481.7,174 486.7,177.4 488.9,177.9 490.9,179 491.7,184.9 490.9,189.9 487.5,194.9 486.7,197.4 481.7,197.4 475,197.9 468.3,196.6 464.9,198.3 461.6,196.6 458.2,194.1 464.9,191.6Z" fill="#f4f7f1"/>
<path d="M490.9,179 491.7,175.7 501.8,179 510.1,182.4 510.1,188.2 508.5,193.3 506.8,198.3 508.5,202.5 505.1,205 500.1,208.3 495.1,210 491.7,210 492.6,205.8 490,201.6 488.4,197.4 487.5,194.9 490.9,189.9 491.7,184.9Z" fill="#f4f7f1"/>
<path d="M512.7,178.2 540.3,178.2 541,180.6 541.1,183.2 542,185.6 542,188.2 540.3,191.6 540.2,194 538.6,195.8 536.9,200 534.4,204.1 531.9,208.3 531.1,211.7 533.6,214.2 536.1,218.4 532.7,219.2 527.7,220 523.5,219.2 519.4,216.7 516.8,213.4 513.5,208.3 510.1,204.1 508.5,202.5 506.8,198.3 508.5,193.3 510.1,188.2 510.1,182.4 512.7,182.4Z" fill="#cfe3c8"/>
<path d="M540.3,191.6 542,188.2 545.3,189.9 546.6,192.3 548.7,194.1 550.4,196.6 552.8,198.3 553.7,200.8 550.3,199.1 546.1,195.8 542,194.9Z" fill="#f4f7f1"/>
<path d="M538.6,195.8 542,194.9 546.1,195.8 550.3,199.1 553.7,200.8 554.5,204.1 558.7,207.5 565.4,209.2 560.4,214.2 555.4,217.5 550.3,219.2 545.3,220 542,218.4 536.1,218.4 533.6,214.2 531.1,211.7 531.9,208.3 534.4,204.1 536.9,200Z" fill="#cfe3c8"/>
<path d="M553.7,200.8 555.4,203.3 557.6,202.4 559.9,202.8 562.1,202.5 564.2,201.6 566.7,202.3 568.8,201.3 570.8,200.5 572.9,200.8 572.5,203.3 572.1,205.8 570.9,207.7 569.9,209.8 568.8,211.7 567.7,213.8 566.3,215.8 564.6,217.5 562.5,219.2 561.2,221.4 559.5,223.4 557.6,224.9 556.2,226.7 554.5,228.4 552.7,230.5 550.3,231.8 550,225.1 550.3,219.2 555.4,217.5 560.4,214.2 565.4,209.2 558.7,207.5 554.5,204.1Z" fill="#f4f7f1"/>
<path d="M536.1,218.4 542,218.4 545.3,220 550.3,219.2 550,225.1 550.3,231.8 549.2,234.7 547,236.8 544.5,238.5 540.3,235.1 535.3,231.8 533.6,229.3 534.4,224.2Z" fill="#cfe3c8"/>
<path d="M525.2,220.9 527.7,220 532.7,219.2 536.1,218.4 534.4,224.2 533.6,229.3 528.6,230.1 524.4,230.1 525.2,225.1Z" fill="#cfe3c8"/>
<path d="M524.4,230.9 528.6,230.1 533.6,229.3 535.3,231.8 540.3,235.1 544.5,238.5 544.4,240.8 546,242.8 545.6,245.2 546.4,247.4 546.8,249.6 546.1,251.9 547.8,253.5 542,254.7 536.9,253.9 532.7,253.5 527.7,254.4 527.7,248.5 524.4,245.2 522.7,240.1 523.5,235.1Z" fill="#cfe3c8"/>
<path d="M522.7,231.8 524.4,230.1 525.2,236.8 522.7,237.1Z" fill="#e6f0e0"/>
<path d="M497.6,218.4 501.8,217.5 508.5,216.7 516.8,217.5 519.4,216.7 523.5,219.2 525.2,220.9 525.2,225.1 524.4,230.1 522.7,235.1 522.7,240.1 524.4,245.2 527.7,248.5 527.7,254.4 523.5,255.2 523.5,259.4 520.2,258.6 515.2,255.2 510.1,254.4 506,253.5 505.1,245.2 499.3,245.2 495.9,243.5 491.7,241 486.7,241.5 484.2,239.3 489.2,238.5 492.6,233.4 495.1,226.7 496.7,221.7Z" fill="#cfe3c8"/>
<path d="M491.7,210 495.1,210 500.1,208.3 505.1,205 508.5,202.5 510.1,204.1 513.5,208.3 516.8,213.4 519.4,216.7 516.8,217.5 508.5,216.7 501.8,217.5 497.6,218.4 495.7,219.7 493.4,220 490,216.7 490.9,213.4Z" fill="#f4f7f1"/>
<path d="M486.7,197.4 488.4,197.4 490,201.6 492.6,205.8 491.7,210 490.9,213.4 490,216.7 493.4,220 492.6,223.4 486.7,223.1 481.7,222.6 478.3,221.7 476.7,218.4 480,214.2 483.4,210 485.9,205 487.5,201.6Z" fill="#cfe3c8"/>
<path d="M464.9,198.3 468.3,196.6 475,197.9 481.7,197.4 486.7,197.4 487.5,201.6 485.9,205 483.4,210 480,214.2 476.7,217.5 474.5,217.4 472.5,216.7 469.1,215.9 467.8,214.2 465.8,213.4 462.4,213.4 463.3,208.3 463.6,203.3Z" fill="#a9cf9c"/>
<path d="M458.2,202.5 461.6,201.3 463.6,203.3 463.3,208.3 462.4,213.4 459.1,214.2 459.1,208.3Z" fill="#cfe3c8"/>
<path d="M456.6,203.3 458.2,202.5 459.1,208.3 459.1,214.2 457.4,214.7 456.6,208.3Z" fill="#f4f7f1"/>
<path d="M449.9,204.1 456.6,203.3 456.6,208.3 457.4,214.7 455.4,215.7 453.2,215.9 451.4,217.9 449,216.7 449.5,210Z" fill="#cfe3c8"/>
<path d="M445.7,200.8 449,197.4 452.4,194.9 458.2,194.1 461.6,196.6 464.9,198.3 461.6,201.3 458.2,202.5 456.6,203.3 449.9,204.1 447.4,205 444,204.1Z" fill="#e6f0e0"/>
<path d="M438.1,205.8 444,204.1 447.4,205 449.9,204.1 449.5,210 449,216.7 446.1,217 443.2,217 441.3,218.4 439,218 438.1,211.7Z" fill="#cfe3c8"/>
<path d="M431.4,206.7 434.8,210 438.1,211.7 439,218 437.2,216.1 434.8,215 432.6,213.9 431.4,211.7 428.9,209.2Z" fill="#f4f7f1"/>
<path d="M425.6,202.5 428.9,201.6 431.4,204.1 431.4,206.7 428.9,209.2 426.4,206.7 425.4,204.7Z" fill="#f4f7f1"/>
<path d="M422.2,197.4 426.4,195.8 429.8,194.9 433.1,198.3 438.1,199.1 441.5,201.6 445.7,200.8 444,204.1 438.1,205.8 438.1,211.7 434.8,210 431.4,206.7 431.4,204.1 428.9,201.6 425.6,202.5 423.9,200.3Z" fill="#f4f7f1"/>
<path d="M418,196.6 422.2,195.8 422.2,197.9 419.7,199.3Z" fill="#cfe3c8"/>
<path d="M417.2,191.6 418.9,191.6 423.1,189.9 428.1,193.3 428.9,193.3 429.8,194.9 426.4,195.8 422.2,195.8 418,196.6 416.4,194.6Z" fill="#cfe3c8"/>
<path d="M476.7,225.1 481.7,224.2 486.7,225.1 488.4,228.4 487.5,233.4 484.2,236.8 481.7,234.3 479.5,233.8 478.3,231.8 476.1,230.8 475.8,228.4Z" fill="#e6f0e0"/>
<path d="M478.3,222.6 481.7,222.6 481.7,224.4 478.3,224.7Z" fill="#e6f0e0"/>
<path d="M486.7,223.1 492.6,223.4 494.9,223.2 496.7,221.7 495.1,226.7 492.6,233.4 489.2,238.5 484.2,239.3 482.5,237.6 484.2,236.8 487.5,233.4 488.4,228.4 486.7,225.1Z" fill="#e6f0e0"/>
<path d="M484.2,241.8 486.7,241.5 491.7,241 495.9,243.5 499.3,245.2 505.1,245.2 506,253.5 510.1,254.4 509.3,258.6 506.8,262.7 507.6,268.6 501.8,268.6 491.7,268.3 483.4,267.3 483.5,264.5 482.5,261.9 483.6,259.8 484.5,257.6 485,255.2 486.1,253.1 485.9,250.8 485.9,248.5 486,246.1 483.9,244.2Z" fill="#f4f7f1"/>
<path d="M510.1,254.4 515.2,255.2 520.2,258.6 523.5,259.4 523.5,255.2 527.7,254.4 532.7,253.5 534.4,258.6 531.9,261.9 526.9,262.7 523.5,265.3 518.5,267.8 513.5,268.6 507.6,268.6 506.8,262.7 509.3,258.6Z" fill="#cfe3c8"/>
<path d="M532.7,253.5 535.3,255.2 536.1,260.2 537.3,265.3 535.3,266.9 533.6,262.7 534.4,258.6Z" fill="#cfe3c8"/>
<path d="M416.4,163.5 419.4,163.1 418.7,164.8Z" fill="#f4f7f1"/>
<path d="M581.3,238.1 583.2,238.5 582.8,240.5Z" fill="#f4f7f1"/>
<path d="M554,254.2 556.7,254.9 556,256.9Z" fill="#f4f7f1"/>
<path d="M471.3,225.1 473,224.7 473.3,228.4 471.6,228.8Z" fill="#f4f7f1"/>
<path d="M535.3,162.3 537.3,161.4 540.3,158.9 545.3,156.4 546.1,153.9 550.3,155.6 555.4,158.1 562.1,160.6 564.6,161.4 566.2,163.1 567.7,165.1 568.8,167.3 571.1,169.2 572.9,171.5 574.4,173.7 576.3,175.7 580.5,176.5 581.3,180.7 577.1,184 572.9,185.7 567.1,187.4 562.1,189.1 558.7,191.6 554.5,189.1 553.8,186.7 552,184.9 550.2,182.5 548.7,179.9 547.9,177.9 546.3,176.6 545.3,174.8 542.8,173.7 542.9,170.7 541.1,169 540.3,166.2 537.8,164.8Z" fill="#7aa860"/>
<path d="M554.5,189.1 558.7,191.6 562.1,189.1 567.1,187.4 572.9,185.7 575.4,188.2 573.7,189.6 572.9,191.6 570.9,192.4 569,193.2 567.1,194.1 565.2,195.1 563,195.4 561.2,196.6 558.6,197.1 556.2,198.3 555.7,196.1 554.5,194.1 554.8,191.6Z" fill="#cfe3c8"/>
<path d="M580.5,176.5 583.8,174 587.2,175.7 589.8,176.7 592.2,178.2 591.1,180.4 589.7,182.4 588.5,184.9 586.3,186.6 584,187.5 582.1,189.1 580,189.2 578,189.9 575.4,188.2 572.9,185.7 577.1,184 581.3,180.7Z" fill="#cfe3c8"/>
<path d="M576.3,175.7 578,174 580.2,172.9 582.1,171.5 583.8,174 580.5,176.5Z" fill="#cfe3c8"/>
<path d="M545.3,151.4 550.3,148.9 555.4,146.4 557.5,146.6 559.5,147.2 561.2,151.4 563.7,155.6 566.2,158.9 564.6,161.4 562.1,160.6 555.4,158.1 550.3,155.6 546.1,153.9Z" fill="#a9cf9c"/>
<path d="M536.9,156.4 540.3,154.7 545.3,151.4 546.1,153.9 545.3,156.4 540.3,158.9 537.3,161.4 536.7,158.9Z" fill="#cfe3c8"/>
<path d="M534.9,156.8 536.9,156.4 536.7,158.9 537.3,161.4 535.9,160.6Z" fill="#cfe3c8"/>
<path d="M537.8,145.5 543.6,144.7 550.3,143.9 552.8,145.2 555.4,146.4 550.3,148.9 545.3,151.4 540.3,154.7 537.8,153.9 538,151.8 538.3,149.7 537.5,147.7Z" fill="#e6f0e0"/>
<path d="M483,267.6 489.9,267.9 500.1,268.1 507,267.9 510.2,269.5 503.9,270.4 503.2,277.7 502,279 502,286.6 501.3,292.3 497.5,293.6 494.4,294.2 493.3,292.4 492.5,290.4 491.9,287.5 489.9,285.3 488.6,283.4 488.1,281.3 488,279 485.4,277.1 485.5,273.9 483.4,270.8Z" fill="#cfe3c8"/>
<path d="M503.9,270.4 510.2,269.5 514,270.8 516.5,273.9 519.7,276.5 522.2,279 520.3,280.9 517.8,282.8 514,285.3 511.4,287.2 507.7,286.6 505.1,288.5 502,289.1 502,286.6 502,279 503.2,277.7Z" fill="#cfe3c8"/>
<path d="M514,270.8 517.8,267.6 522.8,265.1 526.6,265.7 530.4,267 531.1,271.4 529.8,275.8 526.6,278.4 522.2,279 519.7,276.5 516.5,273.9Z" fill="#cfe3c8"/>
<path d="M530.4,267 526.6,265.7 527.9,263.2 533,261.3 535.5,267 536.7,264.5 535.5,260.7 534.2,256.2 540.5,255 548.1,253.1 548,256 548.8,258.8 549.3,261.4 548.1,263.8 545.7,265.2 544.3,267.6 542.3,268.5 540.8,269.9 539.3,271.4 537,271.6 535.5,273.3 535.9,276.2 536.7,279 536.9,281.6 536.1,284.1 533.9,286 531.1,286.6 529.2,286 528.5,281.5 527.9,279 526.6,278.4 529.8,275.8 531.1,271.4Z" fill="#cfe3c8"/>
<path d="M494.4,294.2 497.5,293.6 501.3,292.3 502,289.1 505.1,288.5 507.7,286.6 511.4,287.2 514,285.3 517.8,282.8 520.3,280.9 522.2,279 526.6,278.4 527.9,279 528.5,281.5 529.2,286 531.1,286.6 530.4,290.4 530,292.9 527.9,294.2 525.8,295.7 524.7,298 523.4,300.7 520.9,302.4 517.9,302.6 516.5,305.3 513.9,305.6 511.4,306.2 508.9,304.8 506.4,306.2 504.1,306.9 502,308.1 500.3,306.9 498.2,306.8 496.6,305.3 496.5,303 496.9,299.2 495.6,296.7Z" fill="#7aa860"/>
<path d="M517.8,295.4 520.9,293.6 522.8,294.8 521.3,297.3 518.8,298Z" fill="#ffffff"/>
<path d="M526.6,287.9 528.3,287.2 528.7,289.8 527.1,290.4Z" fill="#ffffff"/>
<path d="M555.7,266.4 558,266.3 559.5,264.5 561.4,263.6 563.3,262.6 563.8,260.5 565.2,258.8 566.1,256.9 567.7,255.6 569,256.2 569.9,258.2 569.8,260.5 570.6,262.6 569.8,264.6 569.2,266.7 569,268.9 568.8,270.9 567.4,272.6 567.2,274.6 566.5,276.5 566.1,278.6 565.6,280.7 564.5,282.6 563.9,284.7 561.6,285.5 559.5,286.8 556.4,286 555.3,284.2 555.9,281.9 554.5,280.3 555,278.2 554.2,275.9 555.5,273.9 555,271.4 555.4,268.9Z" fill="#e6f0e0"/>
<path d="M553.8,254.7 555.7,255 557.6,256.9 555.1,256.2Z" fill="#f4f7f1"/>
<path d="M580.4,276.2 582.9,276.7 582.3,278Z" fill="#f4f7f1"/>
<path d="M585.4,273.9 587.6,272.4 587.3,275.5Z" fill="#f4f7f1"/>
<path d="M714.7,278.8 716.5,277.5 718.4,276.7 720.6,276.3 722.6,274.8 724.9,274.5 727.3,274.3 729.2,273.5 731.2,272.8 733.1,272.1 733.4,269.8 734.8,267.9 736.9,266.1 739,264.2 741.3,263 743.2,261.2 745.7,259.6 748.2,261.2 750.7,258.7 752.5,257.6 754,256.2 757.4,254.2 760,254.2 762.4,255.4 765,255.1 767.4,255.9 766.3,257.6 765.8,259.6 764.9,262.1 766.8,263.6 769.1,264.6 770.9,266.3 773.3,267.1 776.7,267.9 777.1,265.4 777.8,262.9 778.5,260.4 778.8,257.9 779.3,255.8 780,253.7 781.6,255.6 782.5,257.9 784.2,259.2 785,261.2 786.8,263.5 787.5,266.3 788.1,268.9 789.2,271.3 791.2,272.6 792.6,274.6 793.8,276.7 795.9,278 797.8,279.4 799.3,281.3 801.5,283 802.6,285.5 804.4,287.7 805.1,290.5 805.4,293.4 805.1,296.4 804.4,298.3 804.1,300.4 803.4,302.3 802.6,305 800.9,307.3 799.6,310 797.6,312.3 796,313.7 794.2,314.8 791.5,315.2 789.2,316.5 785.9,315.7 782.5,317.3 780.3,316.9 778.3,315.7 776.2,314 774.1,312.3 772.6,310.8 771.6,309 770.2,307 769.1,304.8 767.4,308.1 764.9,305.6 764,303.2 761.6,302.3 759.6,302 757.6,301.4 755.7,300.6 753.4,300.3 751.3,301.5 749,301.4 746.9,302.5 744.5,302.3 742.3,303.1 740,304.8 737.3,305.6 735.1,306.3 732.9,306.9 730.6,307.3 727.6,307.5 724.7,308.1 721.8,307.4 718.9,307.3 719.8,304.9 719.7,302.3 719.4,300.1 718.5,298.2 717.2,296.4 717,294.3 716.2,292.4 715.5,290.5 715.1,287.9 713.9,285.5 713.9,283.2 714.1,281Z" fill="#456a2e"/>
<path d="M785,321.5 787.1,322 789.2,322.4 791.3,322 793.4,321.5 792.6,323.9 792.6,326.5 790.1,328.2 787.2,326.2 785.6,324.1Z" fill="#456a2e"/>
<path d="M848.7,306.4 850.4,307.6 852,309 853.9,310.5 855.4,312.3 858.7,314 860.8,314.2 862.9,314.5 861.5,316.2 860.4,318.2 858.1,319.2 857,321.5 853.7,322.4 854.5,319 853.6,316.9 852.8,314.8 851.6,312.7 850.3,310.6 849.8,308.4Z" fill="#7aa860"/>
<path d="M851.2,320.7 853.7,322.9 852.5,324.6 851.6,326.6 849.5,327.4 847.1,328.6 845.3,330.7 843.6,332.9 841.1,334.1 839.1,334.8 836.9,334.9 834.4,333.2 836.8,332.1 838.6,330.2 840.9,329 842.8,327.4 844.9,325.3 847,323.2 849.3,322.3Z" fill="#7aa860"/>
<path d="M754.9,229.4 757.8,229.7 760.7,230.3 761.6,232.3 763.3,233.6 766,233.2 768.3,231.9 770.5,232.1 772.5,232.8 774.2,234.6 776.7,234.4 777.2,248.7 775.3,247.8 773.3,247 771.3,246.2 770,244.5 768.3,243.1 767.4,241.1 765.7,239.5 764.1,237.8 761.6,236.1 758.2,234.4 755.7,231.9Z" fill="#a9cf9c"/>
<path d="M776.7,234.4 778.7,234.6 780.6,235.3 782.5,236.1 784.2,237.2 785.6,238.7 787.5,239.5 789.6,241.2 791.7,242.8 793.3,244.9 795.1,247 796.8,249.5 799.3,251.2 800.1,252.2 797.2,251.7 794.2,251.2 792,249.7 790.1,247.8 787.9,246.7 785.9,245.3 783.1,245.4 780.8,247 777.2,248.7Z" fill="#f4f7f1"/>
<path d="M794.2,241.1 796,240 798.3,239.8 800.1,238.6 802.6,237.8 802.3,240.8 799.8,241.3 797.6,242.5Z" fill="#f4f7f1"/>
<path d="M811.8,243.7 813.5,245.7 816,246.2 818.3,247.1 820.2,248.7 821.8,250.1 823.8,251.2 825.2,252.9 823.5,253.7 820.7,252.5 818.5,250.4 816.1,249.6 814.3,247.8 813,245.8Z" fill="#f4f7f1"/>
<path d="M835.3,262.1 836.9,263.7 837.8,266.3 836.1,265.4Z" fill="#f4f7f1"/>
<path d="M829.1,274.3 830.7,275.8 832.8,276.3 834.6,277.8 836.4,279.3 833.6,278.3 830.2,276.3Z" fill="#f4f7f1"/>
<path d="M862.1,265.9 865.9,264.9 865.4,267.1Z" fill="#f4f7f1"/>
<path d="M815.2,212.3 817,212.7 816.3,213.7Z" fill="#f4f7f1"/>
<path d="M825.2,215.7 827.7,216 827.1,217Z" fill="#f4f7f1"/>
<path d="M848.7,221 849.8,221.4 850.1,223.5 850.4,225.5 851.5,227.4 850.2,226.1 849.7,223.5Z" fill="#f4f7f1"/>
<path d="M854.2,231.1 856.2,231.8 855.5,233.1Z" fill="#f4f7f1"/>
<path d="M725.9,248.2 728.3,248.1 730.6,248.7 733.5,249.4 736.5,249.2 735.6,250.5 733.1,250.6 730.6,251.2 728.2,250.2 725.6,249.8Z" fill="#a9cf9c"/>
<path d="M736.5,250.4 738.6,249 740.7,247.8 742.7,246.8 744.8,245.8 744.3,247.8 742,249.2 740.3,251.2 737,252.2Z" fill="#a9cf9c"/>
<path d="M745.7,224.4 748.2,223.6 748.5,226.2 749.4,228.6 747,229.4 746.5,226.9Z" fill="#a9cf9c"/>
<path d="M742.3,236.1 744.5,236 746.5,235.3 746,237.5 743,237.8Z" fill="#a9cf9c"/>
<path d="M748.2,234.4 750.8,234.5 753.2,233.6 755.4,234.6 757.4,236.1 755.3,236.7 753.2,236.6 750.8,235.3Z" fill="#a9cf9c"/>
<path d="M754,244.5 756.1,244.2 755.4,246.5Z" fill="#a9cf9c"/>
<path d="M58,76.9 60.2,77.1 62.1,76.5 63.9,75.3 66.8,74 68.6,75.9 70.6,77.4 68.1,78.3 65.6,79.4 63.4,79.9 61.4,81.1 58.6,79.4Z" fill="#7aa860"/>
<path d="M60.6,258.7 63.1,258.7 65.6,259.2 65.9,260.6 62.2,260.3Z" fill="#dba024"/>
<path d="M45.2,264.9 47.5,264.3 47.2,265.6Z" fill="#dba024"/>
<path d="M56.4,276 59.7,276.2 59.4,277 56.5,276.8Z" fill="#dba024"/>
<path d="M110,266.3 111.6,266.3 111.6,267.6 110.1,267.6Z" fill="#dba024"/>
<path d="M114.5,268 116.8,269 116.5,270.1Z" fill="#dba024"/>
<path d="M135.6,247.5 137.6,248.5 136.6,249.5Z" fill="#dba024"/>
<path d="M138.4,250 139.9,250.2 139.6,251.4Z" fill="#dba024"/>
<path d="M397.9,188.5 399.9,188 400.4,190 398.4,190.5Z" fill="#dba024"/>
<path d="M401.4,191 403.5,191.5 402.4,193Z" fill="#dba024"/>
<path d="M413,164.8 415.4,164.1 415,165.8Z" fill="#f4f7f1"/>
<path d="M408,46.1 403,48.1 410.2,50.8 404.2,52.8 411.9,55.5 406.3,57.8 410.2,60.2" fill="none"/>
<path d="M390.4,65.5 397.1,64.2 404.2,64.8 398.5,66.7 405.5,67.2" fill="none"/>
<path d="M395.4,61.8 401.5,63.2 407.5,62.3" fill="none"/>
<path d="M410.5,51.1 408,53.6 410.8,57.5" fill="none"/>
<path d="M330.9,67.9 334.3,69.9 332.6,73.2 336.8,76.2 336,79.9 340.3,82.9" fill="none"/>
<path d="M295.8,51.1 302.5,52.5 309.2,52.8 317.5,53.8" fill="none"/>
<path d="M288.2,321.7 289.6,320.9 290.9,323.1 290.2,326.1 288.8,325.3Z" fill="#a9cf9c"/>
<path d="M285.8,339.7 287.9,339 288.8,341.9 287.1,343Z" fill="#a9cf9c"/>
<path d="M289,347.7 291.8,347.2 293.2,349.4 290.7,350.2Z" fill="#a9cf9c"/>
<path d="M295.3,350.9 298.1,350.2 298.9,351.9 296.4,352.4Z" fill="#a9cf9c"/>
<path d="M284.5,331.8 286.1,331 286.6,333.7 285,334.9Z" fill="#a9cf9c"/>
<g stroke="none">
<rect x="35.1" y="23.2" width="22.5" height="70.6" rx="11.25" fill="#2a3f0a"/>
<rect x="22.6" y="46.7" width="47" height="23.5" rx="11.75" fill="#2a3f0a"/>
<path d="M46.4 28.7L53 40.2H39.8Z M46.4 88.7L53 77.4H39.8Z M28.8 58.6L38.6 52.8V64.7Z M64.8 58.6L54 52.8V64.7Z" fill="#fff"/>
<rect x="35.1" y="100.9" width="22.5" height="69.6" rx="11.25" fill="#2a3f0a"/>
<path d="M39.9 112.2h13v2h-13z M45.4 106.7h2v13h-2z M39.9 156.6h13v2h-13z" fill="#fff"/>
<circle cx="46.4" cy="135.7" r="10.4" fill="#3d4a45"/>
<g fill="none" stroke="#9a9aea" stroke-width="0.8"><circle cx="46.4" cy="135.7" r="10.2"/><ellipse cx="46.4" cy="135.7" rx="5.2" ry="10.2"/><ellipse cx="46.4" cy="135.7" rx="10.2" ry="4.6"/><path d="M46.4 125.5v20.4M36.2 135.7h20.4M38.2 129.5h16.4M38.2 141.9h16.4"/></g>
</g>
</svg><!--/MAP--></div>
  <div id="legend" style="position:absolute;left:13px;top:522px;width:195px;height:26px;background:linear-gradient(90deg,#fff 0%,#dfe9d6 18%,#a9c597 45%,#6e9a4f 68%,#44711f 84%,#2a4a0f 100%)"></div>
  <span style="position:absolute;left:13px;top:521.2px;font-size:15.6px;line-height:17px;color:#111">0</span>
  <span style="position:absolute;left:129.5px;top:521.2px;font-size:15.6px;line-height:17px;color:#111">80,107</span>
  <div class="hr" style="top:561px"></div>
  <div class="hd" style="top:575.5px">Report View by Selection</div>
  <a class="lnk" style="left:812px;top:575.5px">Customize</a>
  <div id="tbl" style="position:absolute;left:1px;top:608px;width:924px;height:130px">
   <div style="position:absolute;left:0;top:0;width:924px;height:52px;background:#f3f3f3;border-top:1px solid #d8d8d8"></div>
   <div class="th" style="left:9px;top:6px;width:62px;text-align:center">Total:</div>
   <div class="th" style="left:2.5px;top:27px;width:62px;text-align:center">2</div>
   <div class="th" style="left:104px;top:16px">Research Fields</div>
   <div class="th" style="left:271px;top:6px;width:154px;text-align:center">Web of Science</div>
   <div class="th" style="left:264.5px;top:27px;width:154px;text-align:center">Documents</div>
   <div class="th" style="left:466px;top:16px;color:#5672a2">Cites</div>
   <svg style="position:absolute;left:514px;top:22px" width="11" height="7" viewBox="0 0 11 7"><path d="M0 0H11L5.5 6.5Z" fill="#6f8fcf"/></svg>
   <div class="th" style="left:595px;top:16px">Cites/Paper</div>
   <div class="th" style="left:771px;top:16px">Top Papers</div>
   <div class="tr" style="top:52px;height:31px"></div>
   <div class="tr" style="top:83px;height:33px"></div>
   <div class="td num" style="left:0;width:74px;top:54px">1</div>
   <div class="td lk" style="left:103px;top:54px">ENGINEERING</div>
   <div class="td num" style="left:300px;width:122px;top:54px">431</div>
   <div class="td num" style="left:446px;width:122px;top:54px">3,578</div>
   <div class="td num" style="left:600px;width:120px;top:54px">8.30</div>
   <div class="bar" style="top:53px"><b style="right:-2.3px">5</b></div>
   <div class="td num" style="left:0;width:74px;top:86.6px">0</div>
   <div class="td lk" style="left:103px;top:86.6px">ALL FIELDS</div>
   <div class="td num" style="left:300px;width:122px;top:86.6px">2,531</div>
   <div class="td num" style="left:446px;width:122px;top:86.6px">25,622</div>
   <div class="td num" style="left:600px;width:120px;top:86.6px">10.12</div>
   <div class="bar" style="top:86px;height:24px"><b style="right:-3px;top:3px">20</b></div>
  </div>
 </div>
</div>
</body>
</html>
